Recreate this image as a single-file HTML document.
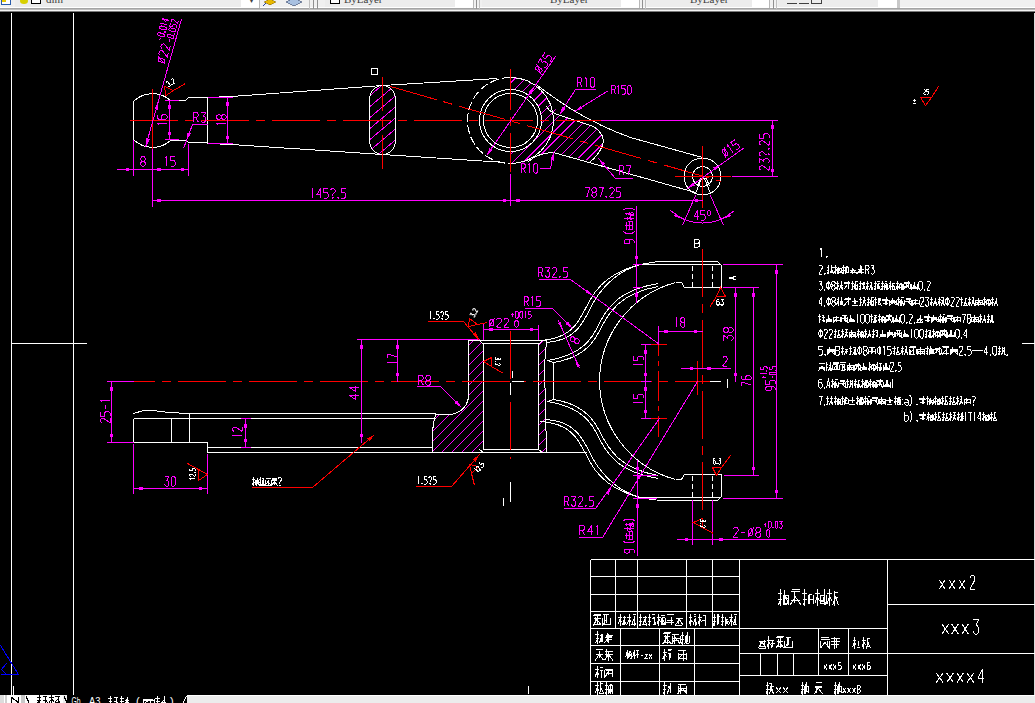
<!DOCTYPE html>
<html><head><meta charset="utf-8"><style>
html,body{margin:0;padding:0;background:#000;overflow:hidden;width:1035px;height:703px}
svg{display:block;font-family:"Liberation Sans",sans-serif}
line,polyline,polygon,path,rect,circle{shape-rendering:crispEdges}
</style></head><body>
<svg width="1035" height="703" viewBox="0 0 1035 703">
<rect x="0" y="0" width="1035" height="703" fill="#000"/>
<line x1="11.5" y1="12.5" x2="11.5" y2="694.5" stroke="#ffffff" stroke-width="1"/>
<line x1="73.5" y1="12.5" x2="73.5" y2="694.5" stroke="#ffffff" stroke-width="1"/>
<line x1="11.5" y1="343.5" x2="86.5" y2="343.5" stroke="#ffffff" stroke-width="1"/>
<line x1="1034.5" y1="12.5" x2="1034.5" y2="694.5" stroke="#dcdcdc" stroke-width="1"/>
<line x1="1021.5" y1="343.5" x2="1034.5" y2="343.5" stroke="#ffffff" stroke-width="1"/>
<line x1="13.5" y1="685.5" x2="13.5" y2="694.5" stroke="#ffffff" stroke-width="1"/>
<line x1="528.5" y1="685.5" x2="528.5" y2="693.5" stroke="#ffffff" stroke-width="1"/>
<line x1="0.5" y1="645.5" x2="18.5" y2="674.5" stroke="#0000ff" stroke-width="1"/>
<line x1="0.5" y1="674.5" x2="18.5" y2="674.5" stroke="#0000ff" stroke-width="1"/>
<polyline points="6.5,663.5 1.5,669.5 6.5,674.5" fill="none" stroke="#0000ff"/>
<defs>
<pattern id="h1" patternUnits="userSpaceOnUse" width="10" height="10" patternTransform="rotate(45)"><line x1="0" y1="0" x2="0" y2="10" stroke="#ff00ff" stroke-width="1.2"/></pattern>
<clipPath id="cpSlot"><rect x="369.5" y="85.5" width="26" height="69" rx="13" ry="14"/></clipPath>
<clipPath id="cpHub"><path d="M510,77 A43,43 0 0 1 546,97 L560,115 L593,126 Q606,135 602,145 Q598,156 590,161 L553,152 Q538,153 528,161 A43,43 0 0 1 510,163 Z"/></clipPath>
</defs>
<g clip-path="url(#cpSlot)"><path d="M360.0,60.0L410.0,17.5M360.0,71.0L410.0,28.5M360.0,82.0L410.0,39.5M360.0,93.0L410.0,50.5M360.0,104.0L410.0,61.5M360.0,115.0L410.0,72.5M360.0,126.0L410.0,83.5M360.0,137.0L410.0,94.5M360.0,148.0L410.0,105.5M360.0,159.0L410.0,116.5M360.0,170.0L410.0,127.5M360.0,181.0L410.0,138.5M360.0,192.0L410.0,149.5M360.0,203.0L410.0,160.5M360.0,214.0L410.0,171.5" stroke="#ff00ff" fill="none"/></g>
<g clip-path="url(#cpHub)"><path d="M500.0,63.0L620.0,-57.0M500.0,73.2L620.0,-46.8M500.0,83.4L620.0,-36.6M500.0,93.6L620.0,-26.4M500.0,103.8L620.0,-16.2M500.0,114.0L620.0,-6.0M500.0,124.2L620.0,4.2M500.0,134.4L620.0,14.4M500.0,144.6L620.0,24.6M500.0,154.8L620.0,34.8M500.0,165.0L620.0,45.0M500.0,175.2L620.0,55.2M500.0,185.4L620.0,65.4M500.0,195.6L620.0,75.6M500.0,205.8L620.0,85.8M500.0,216.0L620.0,96.0M500.0,226.2L620.0,106.2M500.0,236.4L620.0,116.4M500.0,246.6L620.0,126.6M500.0,256.8L620.0,136.8M500.0,267.0L620.0,147.0M500.0,277.2L620.0,157.2M500.0,287.4L620.0,167.4M500.0,297.6L620.0,177.6" stroke="#ff00ff" fill="none"/></g>
<circle cx="510.5" cy="120.5" r="31" fill="#000"/>
<path d="M133.5,101.5 L133.5,139.5 A27,27 0 0 0 170.5,140.5 L185.5,140.5 L188.5,142.5 L207.5,142.5 L207.5,97.5 L188.5,97.5 L185.5,100.5 L170.5,100.5 A27,27 0 0 0 133.5,101.5 Z" fill="none" stroke="#ffffff"/>
<polyline points="207.5,97.5 231.5,96.5 382.5,85.5 497.5,78.5" fill="none" stroke="#ffffff"/>
<polyline points="207.5,143.5 231.5,144.5 382.5,154.5 505.5,162.5" fill="none" stroke="#ffffff"/>
<rect x="369.5" y="85.5" width="26" height="69" rx="13" ry="14" fill="none" stroke="#fff"/>
<circle cx="510.5" cy="120.5" r="31" fill="none" stroke="#fff"/>
<circle cx="510.5" cy="120.5" r="27" fill="none" stroke="#fff"/>
<path d="M510.5,77.5 A43,43 0 0 1 510.5,163.5" fill="none" stroke="#ffffff"/>
<path d="M510.5,77.5 A43,43 0 0 0 510.5,163.5" fill="none" stroke="#ffffff" stroke-dasharray="9,3"/>
<path d="M537.5,85.5 C558,101 585,121 630.5,137.5 L702.5,157.5" fill="none" stroke="#ffffff"/>
<path d="M546.5,106.5 Q550,113 560.5,115.5 L593.5,126.5 Q606,135 602.5,145.5 Q598,156 590.5,161.5" fill="none" stroke="#ffffff"/>
<path d="M528.5,161.5 Q538,153 553.5,152.5 L695.5,192.5" fill="none" stroke="#ffffff"/>
<circle cx="702.5" cy="176.5" r="18.5" fill="none" stroke="#fff"/>
<circle cx="702.5" cy="176.5" r="10" fill="none" stroke="#fff"/>
<polyline points="701.5,178.5 695.5,193.5" fill="none" stroke="#ffffff"/>
<polyline points="704.5,178.5 710.5,193.5" fill="none" stroke="#ffffff"/>
<polyline points="697.5,186.5 700.5,178.5 706.5,178.5 709.5,186.5" fill="none" stroke="#ffffff"/>
<rect x="371.5" y="68.5" width="6" height="6" fill="none" stroke="#fff"/>
<line x1="129.5" y1="120.5" x2="600.5" y2="120.5" stroke="#ff0000" stroke-width="1" stroke-dasharray="48,7,9,7"/>
<line x1="152.5" y1="88.5" x2="152.5" y2="148.5" stroke="#ff0000" stroke-width="1"/>
<line x1="382.5" y1="76.5" x2="382.5" y2="169.5" stroke="#ff0000" stroke-width="1" stroke-dasharray="34,8,8,8"/>
<line x1="510.5" y1="68.5" x2="510.5" y2="171.5" stroke="#ff0000" stroke-width="1" stroke-dasharray="41,7,9,7"/>
<path d="M390.5,86.5 L721.5,181.5" fill="none" stroke="#ff0000" stroke-dasharray="48,7,9,7"/>
<line x1="674.5" y1="176.5" x2="730.5" y2="176.5" stroke="#ff0000" stroke-width="1"/>
<line x1="702.5" y1="145.5" x2="702.5" y2="207.5" stroke="#ff0000" stroke-width="1"/>
<line x1="181.5" y1="19" x2="145.5" y2="147" stroke="#ff00ff" stroke-width="1"/>
<polygon points="146.00,146.50 149.90,139.29 146.43,138.31" fill="#ff00ff"/>
<polygon points="158.50,101.50 154.60,108.71 158.07,109.69" fill="#ff00ff"/>
<path d="M166.75,58.25L167.92,57.05L169.08,57.05L170.25,58.25L170.25,62.75L169.08,63.95L167.92,63.95L166.75,62.75ZM171.42,55.70L165.58,65.30M173.17,57.50L174.33,56.00L176.67,56.00L177.83,57.50L177.83,59.00L173.17,65.00L177.83,65.00M180.17,57.50L181.33,56.00L183.67,56.00L184.83,57.50L184.83,59.00L180.17,65.00L184.83,65.00" stroke="#ff00ff" stroke-width="1" fill="none" stroke-linejoin="round" transform="rotate(-74.3 165 65)"/>
<path d="M163.61,38.81L165.82,38.81M167.67,36.30L168.41,35.16L169.88,35.16L170.62,36.30L170.62,40.86L169.88,42.00L168.41,42.00L167.67,40.86ZM172.33,41.43L172.98,41.43L172.98,42.00L172.33,42.00ZM174.68,36.30L175.42,35.16L176.90,35.16L177.64,36.30L177.64,40.86L176.90,42.00L175.42,42.00L174.68,40.86ZM179.48,36.30L180.22,35.16L180.22,42.00M185.02,42.00L185.02,35.16L182.81,39.72L185.76,39.72" stroke="#ff00ff" stroke-width="1" fill="none" stroke-linejoin="round" transform="rotate(-74.3 162.5 42)"/>
<path d="M173.07,40.31L175.22,40.31M177.01,37.80L177.73,36.66L179.16,36.66L179.88,37.80L179.88,42.36L179.16,43.50L177.73,43.50L177.01,42.36ZM181.54,42.93L182.16,42.93L182.16,43.50L181.54,43.50ZM183.82,37.80L184.54,36.66L185.97,36.66L186.69,37.80L186.69,42.36L185.97,43.50L184.54,43.50L183.82,42.36ZM190.99,36.66L188.12,36.66L188.12,39.51L190.27,39.51L190.99,40.65L190.99,42.36L190.27,43.50L188.12,43.50M192.42,37.80L193.13,36.66L194.57,36.66L195.28,37.80L195.28,38.94L192.42,43.50L195.28,43.50" stroke="#ff00ff" stroke-width="1" fill="none" stroke-linejoin="round" transform="rotate(-74.3 172 43.5)"/>
<line x1="116.5" y1="169.5" x2="188.5" y2="169.5" stroke="#ff00ff" stroke-width="1"/>
<line x1="133.5" y1="139.5" x2="133.5" y2="175.5" stroke="#ff00ff" stroke-width="1"/>
<line x1="152.5" y1="148.5" x2="152.5" y2="206.5" stroke="#ff00ff" stroke-width="1"/>
<line x1="188.5" y1="143.5" x2="188.5" y2="175.5" stroke="#ff00ff" stroke-width="1"/>
<polygon points="133.50,169.50 125.50,167.70 125.50,171.30" fill="#ff00ff"/>
<polygon points="152.50,169.50 160.50,171.30 160.50,167.70" fill="#ff00ff"/>
<polygon points="188.50,169.50 180.50,167.70 180.50,171.30" fill="#ff00ff"/>
<path d="M141.83,156.64L144.17,156.64L145.33,158.20L145.33,159.76L144.17,161.32L141.83,161.32L140.67,159.76L140.67,158.20ZM141.83,161.32L140.67,162.88L140.67,164.44L141.83,166.00L144.17,166.00L145.33,164.44L145.33,162.88L144.17,161.32" stroke="#ff00ff" stroke-width="1" fill="none" stroke-linejoin="round"/>
<path d="M165.27,158.20L166.45,156.64L166.45,166.00M175.32,156.64L170.59,156.64L170.59,160.54L174.14,160.54L175.32,162.10L175.32,164.44L174.14,166.00L170.59,166.00" stroke="#ff00ff" stroke-width="1" fill="none" stroke-linejoin="round"/>
<line x1="164.5" y1="100.5" x2="178.5" y2="100.5" stroke="#ff00ff" stroke-width="1"/>
<line x1="164.5" y1="139.5" x2="178.5" y2="139.5" stroke="#ff00ff" stroke-width="1"/>
<line x1="169.5" y1="100.5" x2="169.5" y2="139.5" stroke="#ff00ff" stroke-width="1"/>
<polygon points="169.50,100.50 167.70,108.50 171.30,108.50" fill="#ff00ff"/>
<polygon points="169.50,139.50 171.30,131.50 167.70,131.50" fill="#ff00ff"/>
<path d="M162.27,112.20L163.45,110.64L163.45,120.00M171.73,110.64L168.77,110.64L167.59,112.20L167.59,118.44L168.77,120.00L171.14,120.00L172.32,118.44L172.32,116.10L171.14,114.54L167.59,114.54" stroke="#ff00ff" stroke-width="1" fill="none" stroke-linejoin="round" transform="rotate(-90 167 120)"/>
<line x1="207.5" y1="97.5" x2="232.5" y2="97.5" stroke="#ff00ff" stroke-width="1"/>
<line x1="207.5" y1="143.5" x2="232.5" y2="143.5" stroke="#ff00ff" stroke-width="1"/>
<line x1="227.5" y1="97.5" x2="227.5" y2="143.5" stroke="#ff00ff" stroke-width="1"/>
<polygon points="227.50,97.50 225.70,105.50 229.30,105.50" fill="#ff00ff"/>
<polygon points="227.50,143.50 229.30,135.50 225.70,135.50" fill="#ff00ff"/>
<path d="M221.27,112.20L222.45,110.64L222.45,120.00M227.77,110.64L230.14,110.64L231.32,112.20L231.32,113.76L230.14,115.32L227.77,115.32L226.59,113.76L226.59,112.20ZM227.77,115.32L226.59,116.88L226.59,118.44L227.77,120.00L230.14,120.00L231.32,118.44L231.32,116.88L230.14,115.32" stroke="#ff00ff" stroke-width="1" fill="none" stroke-linejoin="round" transform="rotate(-90 226 120)"/>
<path d="M193.25,122.00L193.25,112.64L197.00,112.64L198.25,114.20L198.25,115.76L197.00,117.32L193.25,117.32M195.75,117.32L198.25,122.00M200.75,112.64L205.75,112.64L203.25,116.54L204.50,116.54L205.75,118.10L205.75,120.44L204.50,122.00L202.00,122.00L200.75,120.44" stroke="#ff00ff" stroke-width="1" fill="none" stroke-linejoin="round"/>
<line x1="192.5" y1="124.5" x2="207.5" y2="124.5" stroke="#ff00ff" stroke-width="1"/>
<line x1="192.5" y1="124.5" x2="183.5" y2="148.5" stroke="#ff00ff" stroke-width="1"/>
<polygon points="186.50,140.50 191.00,133.64 187.63,132.38" fill="#ff00ff"/>
<line x1="152.5" y1="200.5" x2="510.5" y2="200.5" stroke="#ff00ff" stroke-width="1"/>
<polygon points="152.50,200.50 160.50,202.30 160.50,198.70" fill="#ff00ff"/>
<polygon points="510.50,200.50 502.50,198.70 502.50,202.30" fill="#ff00ff"/>
<path d="M311.71,190.20L312.85,188.64L312.85,198.00M320.25,198.00L320.25,188.64L316.83,194.88L321.38,194.88M328.22,188.64L323.66,188.64L323.66,192.54L327.08,192.54L328.22,194.10L328.22,196.44L327.08,198.00L323.66,198.00M330.49,190.20L331.63,188.64L333.91,188.64L335.05,190.20L335.05,191.76L332.77,194.10L332.77,195.66M332.31,197.38L333.22,197.38L333.22,198.00L332.31,198.00ZM337.68,197.22L338.68,197.22L338.68,198.00L337.68,198.00ZM345.86,188.64L341.31,188.64L341.31,192.54L344.72,192.54L345.86,194.10L345.86,196.44L344.72,198.00L341.31,198.00" stroke="#ff00ff" stroke-width="1" fill="none" stroke-linejoin="round"/>
<line x1="510.5" y1="173.5" x2="510.5" y2="205.5" stroke="#ff00ff" stroke-width="1"/>
<line x1="510.5" y1="200.5" x2="702.5" y2="200.5" stroke="#ff00ff" stroke-width="1"/>
<polygon points="511.50,200.50 519.50,202.30 519.50,198.70" fill="#ff00ff"/>
<polygon points="702.50,200.50 694.50,198.70 694.50,202.30" fill="#ff00ff"/>
<path d="M585.13,187.64L589.67,187.64L586.84,197.00M593.07,187.64L595.34,187.64L596.48,189.20L596.48,190.76L595.34,192.32L593.07,192.32L591.94,190.76L591.94,189.20ZM593.07,192.32L591.94,193.88L591.94,195.44L593.07,197.00L595.34,197.00L596.48,195.44L596.48,193.88L595.34,192.32M598.75,187.64L603.28,187.64L600.45,197.00M605.91,196.22L606.90,196.22L606.90,197.00L605.91,197.00ZM609.52,189.20L610.66,187.64L612.93,187.64L614.06,189.20L614.06,190.76L609.52,197.00L614.06,197.00M620.87,187.64L616.33,187.64L616.33,191.54L619.73,191.54L620.87,193.10L620.87,195.44L619.73,197.00L616.33,197.00" stroke="#ff00ff" stroke-width="1" fill="none" stroke-linejoin="round"/>
<line x1="600.5" y1="120.5" x2="777.5" y2="120.5" stroke="#ff00ff" stroke-width="1"/>
<line x1="731.5" y1="176.5" x2="777.5" y2="176.5" stroke="#ff00ff" stroke-width="1"/>
<line x1="772.5" y1="120.5" x2="772.5" y2="176.5" stroke="#ff00ff" stroke-width="1"/>
<polygon points="772.50,120.50 770.70,128.50 774.30,128.50" fill="#ff00ff"/>
<polygon points="772.50,176.50 774.30,168.50 770.70,168.50" fill="#ff00ff"/>
<path d="M750.66,144.20L751.83,142.64L754.16,142.64L755.32,144.20L755.32,145.76L750.66,152.00L755.32,152.00M757.65,142.64L762.31,142.64L759.98,146.54L761.14,146.54L762.31,148.10L762.31,150.44L761.14,152.00L758.81,152.00L757.65,150.44M764.63,144.20L765.80,142.64L768.13,142.64L769.29,144.20L769.29,145.76L766.96,148.10L766.96,149.66M766.50,151.38L767.43,151.38L767.43,152.00L766.50,152.00ZM771.98,151.22L773.00,151.22L773.00,152.00L771.98,152.00ZM775.69,144.20L776.86,142.64L779.19,142.64L780.35,144.20L780.35,145.76L775.69,152.00L780.35,152.00M787.34,142.64L782.68,142.64L782.68,146.54L786.17,146.54L787.34,148.10L787.34,150.44L786.17,152.00L782.68,152.00" stroke="#ff00ff" stroke-width="1" fill="none" stroke-linejoin="round" transform="rotate(-90 769 152)"/>
<line x1="486.5" y1="155.5" x2="555.5" y2="56.5" stroke="#ff00ff" stroke-width="1"/>
<polygon points="486.50,155.50 492.56,149.98 489.61,147.91" fill="#ff00ff"/>
<polygon points="534.50,86.50 528.44,92.02 531.39,94.09" fill="#ff00ff"/>
<path d="M537.83,58.98L539.06,57.73L540.28,57.73L541.50,58.98L541.50,63.66L540.28,64.91L539.06,64.91L537.83,63.66ZM542.72,56.33L536.61,66.31M544.56,56.64L549.44,56.64L547.00,60.54L548.22,60.54L549.44,62.10L549.44,64.44L548.22,66.00L545.78,66.00L544.56,64.44M556.78,56.64L551.89,56.64L551.89,60.54L555.56,60.54L556.78,62.10L556.78,64.44L555.56,66.00L551.89,66.00" stroke="#ff00ff" stroke-width="1" fill="none" stroke-linejoin="round" transform="rotate(-55 547 66)"/>
<path d="M577.18,87.00L577.18,77.64L580.71,77.64L581.88,79.20L581.88,80.76L580.71,82.32L577.18,82.32M579.53,82.32L581.88,87.00M584.82,79.20L586.00,77.64L586.00,87.00M590.12,79.20L591.29,77.64L593.65,77.64L594.82,79.20L594.82,85.44L593.65,87.00L591.29,87.00L590.12,85.44Z" stroke="#ff00ff" stroke-width="1" fill="none" stroke-linejoin="round"/>
<line x1="575.5" y1="89.5" x2="595.5" y2="89.5" stroke="#ff00ff" stroke-width="1"/>
<line x1="575.5" y1="89.5" x2="559.5" y2="114.5" stroke="#ff00ff" stroke-width="1"/>
<polygon points="559.50,114.50 565.37,108.77 562.35,106.81" fill="#ff00ff"/>
<path d="M611.91,94.00L611.91,85.36L614.65,85.36L615.57,86.80L615.57,88.24L614.65,89.68L611.91,89.68M613.74,89.68L615.57,94.00M617.85,86.80L618.76,85.36L618.76,94.00M625.61,85.36L621.96,85.36L621.96,88.96L624.70,88.96L625.61,90.40L625.61,92.56L624.70,94.00L621.96,94.00M627.43,86.80L628.35,85.36L630.17,85.36L631.09,86.80L631.09,92.56L630.17,94.00L628.35,94.00L627.43,92.56Z" stroke="#ff00ff" stroke-width="1" fill="none" stroke-linejoin="round"/>
<line x1="608.5" y1="90.5" x2="574.5" y2="111.5" stroke="#ff00ff" stroke-width="1"/>
<polygon points="574.50,111.50 582.24,108.79 580.33,105.73" fill="#ff00ff"/>
<path d="M521.12,173.00L521.12,163.64L524.47,163.64L525.59,165.20L525.59,166.76L524.47,168.32L521.12,168.32M523.35,168.32L525.59,173.00M528.38,165.20L529.50,163.64L529.50,173.00M533.41,165.20L534.53,163.64L536.76,163.64L537.88,165.20L537.88,171.44L536.76,173.00L534.53,173.00L533.41,171.44Z" stroke="#ff00ff" stroke-width="1" fill="none" stroke-linejoin="round"/>
<polyline points="539.5,168.5 550.5,168.5 553.5,152.5" fill="none" stroke="#ff00ff"/>
<polygon points="553.50,152.50 550.34,160.07 553.88,160.69" fill="#ff00ff"/>
<path d="M619.17,175.00L619.17,165.64L622.67,165.64L623.83,167.20L623.83,168.76L622.67,170.32L619.17,170.32M621.50,170.32L623.83,175.00M626.17,165.64L630.83,165.64L627.92,175.00" stroke="#ff00ff" stroke-width="1" fill="none" stroke-linejoin="round"/>
<polyline points="632.5,178.5 615.5,178.5 598.5,158.5" fill="none" stroke="#ff00ff"/>
<polygon points="598.50,158.50 602.26,165.79 605.02,163.47" fill="#ff00ff"/>
<line x1="687.5" y1="188.5" x2="744.5" y2="147.5" stroke="#ff00ff" stroke-width="1"/>
<polygon points="687.50,188.50 695.06,185.32 692.97,182.39" fill="#ff00ff"/>
<polygon points="720.50,164.50 712.94,167.68 715.03,170.61" fill="#ff00ff"/>
<path d="M724.76,145.48L725.94,144.23L727.12,144.23L728.29,145.48L728.29,150.16L727.12,151.41L725.94,151.41L724.76,150.16ZM729.47,142.83L723.59,152.81M731.82,144.70L733.00,143.14L733.00,152.50M741.82,143.14L737.12,143.14L737.12,147.04L740.65,147.04L741.82,148.60L741.82,150.94L740.65,152.50L737.12,152.50" stroke="#ff00ff" stroke-width="1" fill="none" stroke-linejoin="round" transform="rotate(-35.5 733 152.5)"/>
<line x1="695.5" y1="195.5" x2="682.5" y2="225.5" stroke="#ff00ff" stroke-width="1"/>
<line x1="710.5" y1="195.5" x2="723.5" y2="225.5" stroke="#ff00ff" stroke-width="1"/>
<path d="M670.5,210.5 A47,47 0 0 0 734.5,210.5" fill="none" stroke="#ff00ff"/>
<polygon points="681.50,218.50 675.47,212.94 673.67,216.06" fill="#ff00ff"/>
<polygon points="723.50,218.50 731.33,216.06 729.53,212.94" fill="#ff00ff"/>
<path d="M697.44,220.00L697.44,210.64L694.11,216.88L698.56,216.88M705.22,210.64L700.78,210.64L700.78,214.54L704.11,214.54L705.22,216.10L705.22,218.44L704.11,220.00L700.78,220.00M708.33,210.64L709.89,210.64L710.78,211.89L710.78,214.07L709.89,215.32L708.33,215.32L707.44,214.07L707.44,211.89Z" stroke="#ff00ff" stroke-width="1" fill="none" stroke-linejoin="round"/>
<path d="M913.06,100.64L915.84,100.64M914.45,99.20L914.45,102.08M913.06,103.52L915.84,103.52" stroke="#ffffff" stroke-width="1" fill="none" stroke-linejoin="round"/>
<polygon points="920.5,97.5 931.5,97.5 925.5,105.5" fill="none" stroke="#ff0000"/>
<line x1="931.5" y1="97.5" x2="938.5" y2="86.5" stroke="#ff0000" stroke-width="1"/>
<path d="M923.50,90.40L924.00,89.68L925.00,89.68L925.50,90.40L925.50,91.12L923.50,94.00L925.50,94.00M928.50,89.68L926.50,89.68L926.50,91.48L928.00,91.48L928.50,92.20L928.50,93.28L928.00,94.00L926.50,94.00" stroke="#ffffff" stroke-width="1" fill="none" stroke-linejoin="round"/>
<defs>
<clipPath id="cpWallL"><path d="M468,340 L479,340 L483,344 L483,449 L479,452 L432,452 Q431,430 435,414 L450,414 Q466,412 468,397 Z"/></clipPath>
<clipPath id="cpWallR"><path d="M538,344 L542,340 L547,340 L544.5,365 L546,452 L538,452 Z"/></clipPath>
</defs>
<g clip-path="url(#cpWallL)"><path d="M420.0,324.0L560.0,184.0M420.0,334.0L560.0,194.0M420.0,344.0L560.0,204.0M420.0,354.0L560.0,214.0M420.0,364.0L560.0,224.0M420.0,374.0L560.0,234.0M420.0,384.0L560.0,244.0M420.0,394.0L560.0,254.0M420.0,404.0L560.0,264.0M420.0,414.0L560.0,274.0M420.0,424.0L560.0,284.0M420.0,434.0L560.0,294.0M420.0,444.0L560.0,304.0M420.0,454.0L560.0,314.0M420.0,464.0L560.0,324.0M420.0,474.0L560.0,334.0M420.0,484.0L560.0,344.0M420.0,494.0L560.0,354.0M420.0,504.0L560.0,364.0M420.0,514.0L560.0,374.0M420.0,524.0L560.0,384.0M420.0,534.0L560.0,394.0M420.0,544.0L560.0,404.0M420.0,554.0L560.0,414.0M420.0,564.0L560.0,424.0M420.0,574.0L560.0,434.0M420.0,584.0L560.0,444.0M420.0,594.0L560.0,454.0M420.0,604.0L560.0,464.0" stroke="#ff00ff" fill="none"/></g>
<g clip-path="url(#cpWallR)"><path d="M520.0,324.0L560.0,284.0M520.0,334.0L560.0,294.0M520.0,344.0L560.0,304.0M520.0,354.0L560.0,314.0M520.0,364.0L560.0,324.0M520.0,374.0L560.0,334.0M520.0,384.0L560.0,344.0M520.0,394.0L560.0,354.0M520.0,404.0L560.0,364.0M520.0,414.0L560.0,374.0M520.0,424.0L560.0,384.0M520.0,434.0L560.0,394.0M520.0,444.0L560.0,404.0M520.0,454.0L560.0,414.0M520.0,464.0L560.0,424.0M520.0,474.0L560.0,434.0M520.0,484.0L560.0,444.0M520.0,494.0L560.0,454.0M520.0,504.0L560.0,464.0" stroke="#ff00ff" fill="none"/></g>
<path d="M133.5,413.5 L143.5,410.5 L153.5,410.5 L168.5,412.5 L189.5,413.5 L435.5,413.5" fill="none" stroke="#ffffff"/>
<line x1="133.5" y1="418.5" x2="435.5" y2="418.5" stroke="#ffffff" stroke-width="1"/>
<line x1="133.5" y1="418.5" x2="133.5" y2="442.5" stroke="#ffffff" stroke-width="1"/>
<line x1="171.5" y1="418.5" x2="171.5" y2="442.5" stroke="#ffffff" stroke-width="1"/>
<line x1="189.5" y1="413.5" x2="189.5" y2="442.5" stroke="#ffffff" stroke-width="1"/>
<polyline points="133.5,442.5 207.5,442.5 207.5,452.5 432.5,452.5" fill="none" stroke="#ffffff"/>
<line x1="207.5" y1="447.5" x2="432.5" y2="447.5" stroke="#ffffff" stroke-width="1"/>
<path d="M450.5,414.5 Q466,412 468.5,397.5 L468.5,340.5 L546.5,340.5 L544.5,365.5 L546.5,452.5 L432.5,452.5" fill="none" stroke="#ffffff"/>
<path d="M435.5,414.5 Q431,430 432.5,452.5" fill="none" stroke="#ffffff"/>
<line x1="435.5" y1="414.5" x2="450.5" y2="414.5" stroke="#ffffff" stroke-width="1"/>
<rect x="483.5" y="343.5" width="55" height="106" fill="none" stroke="#fff"/>
<line x1="479.5" y1="340.5" x2="483.5" y2="344.5" stroke="#ffffff" stroke-width="1"/>
<line x1="542.5" y1="340.5" x2="538.5" y2="344.5" stroke="#ffffff" stroke-width="1"/>
<line x1="479.5" y1="449.5" x2="483.5" y2="452.5" stroke="#ffffff" stroke-width="1"/>
<line x1="538.5" y1="449.5" x2="542.5" y2="452.5" stroke="#ffffff" stroke-width="1"/>
<path d="M540.5,340.5 C575,338.5 580,318 590,300 C600,282 620,266 655.5,262 L717.5,261.5 L721.5,265.5 L721.5,287.5 L684.5,287.5 L681.5,282.5 L675.5,282.5" fill="none" stroke="#fff"/><path d="M546.5,342.5 C577,340.5 584,321 593,303 C603,286 618,271 640,264.5 L721,264.5" fill="none" stroke="#fff"/><path d="M547.5,360.5 C575,356 588,345 596,330 C606,308 618,290 658.5,283.5" fill="none" stroke="#fff"/><path d="M553.5,362.5 C579,358.5 591,347 599,332 C609,311 621,293 658.5,286.5" fill="none" stroke="#fff"/><path d="M547.5,360.5 L553.5,362.5 L553.5,381.5" fill="none" stroke="#fff"/><path d="M675.5,282.5 A103,103 0 0 0 599.5,381.5" fill="none" stroke="#fff"/>
<g transform="matrix(1,0,0,-1,0,762)"><path d="M540.5,340.5 C575,338.5 580,318 590,300 C600,282 620,266 655.5,262 L717.5,261.5 L721.5,265.5 L721.5,287.5 L684.5,287.5 L681.5,282.5 L675.5,282.5" fill="none" stroke="#fff"/><path d="M546.5,342.5 C577,340.5 584,321 593,303 C603,286 618,271 640,264.5 L721,264.5" fill="none" stroke="#fff"/><path d="M547.5,360.5 C575,356 588,345 596,330 C606,308 618,290 658.5,283.5" fill="none" stroke="#fff"/><path d="M553.5,362.5 C579,358.5 591,347 599,332 C609,311 621,293 658.5,286.5" fill="none" stroke="#fff"/><path d="M547.5,360.5 L553.5,362.5 L553.5,381.5" fill="none" stroke="#fff"/><path d="M675.5,282.5 A103,103 0 0 0 599.5,381.5" fill="none" stroke="#fff"/></g>
<line x1="546.5" y1="452.5" x2="586.5" y2="452.5" stroke="#ffffff" stroke-width="1"/>
<line x1="692.5" y1="265.5" x2="692.5" y2="287.5" stroke="#ffffff" stroke-width="1" stroke-dasharray="5,3"/>
<line x1="712.5" y1="265.5" x2="712.5" y2="287.5" stroke="#ffffff" stroke-width="1" stroke-dasharray="5,3"/>
<line x1="692.5" y1="475.5" x2="692.5" y2="498.5" stroke="#ffffff" stroke-width="1" stroke-dasharray="5,3"/>
<line x1="712.5" y1="475.5" x2="712.5" y2="498.5" stroke="#ffffff" stroke-width="1" stroke-dasharray="5,3"/>
<line x1="133" y1="381.5" x2="720" y2="381.5" stroke="#ff0000" stroke-dasharray="48,7,9,7" stroke-dashoffset="26"/>
<line x1="510.5" y1="330.5" x2="510.5" y2="458.5" stroke="#ff0000" stroke-width="1" stroke-dasharray="48,7,9,7"/>
<line x1="702.5" y1="248.5" x2="702.5" y2="514.5" stroke="#ff0000" stroke-width="1" stroke-dasharray="48,7,9,7"/>
<line x1="658.5" y1="325.5" x2="658.5" y2="436.5" stroke="#ff0000" stroke-width="1" stroke-dasharray="30,5,5,5"/>
<line x1="697.5" y1="360.5" x2="697.5" y2="394.5" stroke="#ff0000" stroke-width="1"/>
<line x1="650.5" y1="344.5" x2="666.5" y2="344.5" stroke="#ff0000" stroke-width="1"/>
<line x1="650.5" y1="418.5" x2="666.5" y2="418.5" stroke="#ff0000" stroke-width="1"/>
<line x1="512.5" y1="370.5" x2="512.5" y2="377.5" stroke="#ffffff" stroke-width="1"/>
<line x1="511.5" y1="381.5" x2="523.5" y2="381.5" stroke="#ffffff" stroke-width="1"/>
<line x1="510.5" y1="382.5" x2="510.5" y2="394.5" stroke="#ffffff" stroke-width="1"/>
<line x1="709.5" y1="381.5" x2="720.5" y2="381.5" stroke="#ffffff" stroke-width="1"/>
<line x1="727.5" y1="378.5" x2="727.5" y2="387.5" stroke="#ffffff" stroke-width="1"/>
<line x1="510.5" y1="481.5" x2="510.5" y2="501.5" stroke="#ffffff" stroke-width="1"/>
<line x1="503.5" y1="497.5" x2="503.5" y2="505.5" stroke="#ffffff" stroke-width="1"/>
<line x1="106.5" y1="381.5" x2="133.5" y2="381.5" stroke="#ff00ff" stroke-width="1"/>
<line x1="106.5" y1="442.5" x2="133.5" y2="442.5" stroke="#ff00ff" stroke-width="1"/>
<line x1="111.5" y1="381.5" x2="111.5" y2="442.5" stroke="#ff00ff" stroke-width="1"/>
<polygon points="111.50,382.50 109.70,390.50 113.30,390.50" fill="#ff00ff"/>
<polygon points="111.50,441.50 113.30,433.50 109.70,433.50" fill="#ff00ff"/>
<path d="M98.13,403.20L99.26,401.64L101.52,401.64L102.65,403.20L102.65,404.76L98.13,411.00L102.65,411.00M109.43,401.64L104.91,401.64L104.91,405.54L108.30,405.54L109.43,407.10L109.43,409.44L108.30,411.00L104.91,411.00M112.26,406.63L115.65,406.63M119.04,403.20L120.17,401.64L120.17,411.00" stroke="#ff00ff" stroke-width="1" fill="none" stroke-linejoin="round" transform="rotate(-90 110 411)"/>
<line x1="240.5" y1="418.5" x2="250.5" y2="418.5" stroke="#ff00ff" stroke-width="1"/>
<line x1="240.5" y1="447.5" x2="250.5" y2="447.5" stroke="#ff00ff" stroke-width="1"/>
<line x1="245.5" y1="418.5" x2="245.5" y2="447.5" stroke="#ff00ff" stroke-width="1"/>
<polygon points="245.50,419.50 243.70,427.50 247.30,427.50" fill="#ff00ff"/>
<polygon points="245.50,446.50 247.30,438.50 243.70,438.50" fill="#ff00ff"/>
<path d="M237.64,424.20L238.73,422.64L238.73,432.00M242.55,424.20L243.64,422.64L245.82,422.64L246.91,424.20L246.91,425.76L242.55,432.00L246.91,432.00" stroke="#ff00ff" stroke-width="1" fill="none" stroke-linejoin="round" transform="rotate(-90 242 432)"/>
<line x1="133.5" y1="443.5" x2="133.5" y2="493.5" stroke="#ff00ff" stroke-width="1"/>
<line x1="207.5" y1="453.5" x2="207.5" y2="493.5" stroke="#ff00ff" stroke-width="1"/>
<line x1="133.5" y1="488.5" x2="207.5" y2="488.5" stroke="#ff00ff" stroke-width="1"/>
<polygon points="134.50,488.50 142.50,490.30 142.50,486.70" fill="#ff00ff"/>
<polygon points="206.50,488.50 198.50,486.70 198.50,490.30" fill="#ff00ff"/>
<path d="M164.58,476.64L168.92,476.64L166.75,480.54L167.83,480.54L168.92,482.10L168.92,484.44L167.83,486.00L165.67,486.00L164.58,484.44M171.08,478.20L172.17,476.64L174.33,476.64L175.42,478.20L175.42,484.44L174.33,486.00L172.17,486.00L171.08,484.44Z" stroke="#ff00ff" stroke-width="1" fill="none" stroke-linejoin="round"/>
<line x1="356.5" y1="339.5" x2="479.5" y2="339.5" stroke="#ff00ff" stroke-width="1"/>
<line x1="361.5" y1="339.5" x2="361.5" y2="442.5" stroke="#ff00ff" stroke-width="1"/>
<polygon points="361.50,340.50 359.70,348.50 363.30,348.50" fill="#ff00ff"/>
<polygon points="361.50,441.50 363.30,433.50 359.70,433.50" fill="#ff00ff"/>
<path d="M356.33,393.00L356.33,383.64L352.33,389.88L357.67,389.88M364.33,393.00L364.33,383.64L360.33,389.88L365.67,389.88" stroke="#ff00ff" stroke-width="1" fill="none" stroke-linejoin="round" transform="rotate(-90 359 393)"/>
<line x1="397.5" y1="339.5" x2="397.5" y2="381.5" stroke="#ff00ff" stroke-width="1"/>
<polygon points="397.50,340.50 395.70,348.50 399.30,348.50" fill="#ff00ff"/>
<polygon points="397.50,380.50 399.30,372.50 395.70,372.50" fill="#ff00ff"/>
<path d="M392.64,351.20L393.73,349.64L393.73,359.00M397.55,349.64L401.91,349.64L399.18,359.00" stroke="#ff00ff" stroke-width="1" fill="none" stroke-linejoin="round" transform="rotate(-90 397 359)"/>
<line x1="483.5" y1="323.5" x2="483.5" y2="339.5" stroke="#ff00ff" stroke-width="1"/>
<line x1="538.5" y1="324.5" x2="538.5" y2="339.5" stroke="#ff00ff" stroke-width="1"/>
<line x1="483.5" y1="329.5" x2="538.5" y2="329.5" stroke="#ff00ff" stroke-width="1"/>
<polygon points="484.50,329.50 492.50,331.30 492.50,327.70" fill="#ff00ff"/>
<polygon points="537.50,329.50 529.50,327.70 529.50,331.30" fill="#ff00ff"/>
<path d="M489.83,320.52L491.06,319.37L492.28,319.37L493.50,320.52L493.50,324.84L492.28,325.99L491.06,325.99L489.83,324.84ZM494.72,318.07L488.61,327.29M496.56,319.80L497.78,318.36L500.22,318.36L501.44,319.80L501.44,321.24L496.56,327.00L501.44,327.00M503.89,319.80L505.11,318.36L507.56,318.36L508.78,319.80L508.78,321.24L503.89,327.00L508.78,327.00" stroke="#ff00ff" stroke-width="1" fill="none" stroke-linejoin="round"/>
<path d="M510.99,314.76L513.57,314.76M512.28,312.92L512.28,316.60M515.31,312.60L516.07,311.52L517.59,311.52L518.34,312.60L518.34,316.92L517.59,318.00L516.07,318.00L515.31,316.92ZM519.86,312.60L520.62,311.52L522.14,311.52L522.90,312.60L522.90,316.92L522.14,318.00L520.62,318.00L519.86,316.92ZM524.79,312.60L525.55,311.52L525.55,318.00M531.24,311.52L528.21,311.52L528.21,314.22L530.48,314.22L531.24,315.30L531.24,316.92L530.48,318.00L528.21,318.00" stroke="#ff00ff" stroke-width="1" fill="none" stroke-linejoin="round"/>
<path d="M514.83,321.60L515.67,320.52L517.33,320.52L518.17,321.60L518.17,325.92L517.33,327.00L515.67,327.00L514.83,325.92Z" stroke="#ff00ff" stroke-width="1" fill="none" stroke-linejoin="round"/>
<path d="M418.25,385.00L418.25,375.64L422.00,375.64L423.25,377.20L423.25,378.76L422.00,380.32L418.25,380.32M420.75,380.32L423.25,385.00M427.00,375.64L429.50,375.64L430.75,377.20L430.75,378.76L429.50,380.32L427.00,380.32L425.75,378.76L425.75,377.20ZM427.00,380.32L425.75,381.88L425.75,383.44L427.00,385.00L429.50,385.00L430.75,383.44L430.75,381.88L429.50,380.32" stroke="#ff00ff" stroke-width="1" fill="none" stroke-linejoin="round"/>
<line x1="416.5" y1="386.5" x2="440.5" y2="386.5" stroke="#ff00ff" stroke-width="1"/>
<line x1="440.5" y1="386.5" x2="461.5" y2="407.5" stroke="#ff00ff" stroke-width="1"/>
<polygon points="461.50,407.50 457.12,400.57 454.57,403.12" fill="#ff00ff"/>
<path d="M524.12,306.00L524.12,296.64L527.47,296.64L528.59,298.20L528.59,299.76L527.47,301.32L524.12,301.32M526.35,301.32L528.59,306.00M531.38,298.20L532.50,296.64L532.50,306.00M540.88,296.64L536.41,296.64L536.41,300.54L539.76,300.54L540.88,302.10L540.88,304.44L539.76,306.00L536.41,306.00" stroke="#ff00ff" stroke-width="1" fill="none" stroke-linejoin="round"/>
<line x1="524.5" y1="308.5" x2="552.5" y2="308.5" stroke="#ff00ff" stroke-width="1"/>
<line x1="552.5" y1="308.5" x2="573.5" y2="329.5" stroke="#ff00ff" stroke-width="1"/>
<polygon points="572.50,328.50 568.12,321.57 565.57,324.12" fill="#ff00ff"/>
<line x1="558.5" y1="320.5" x2="579.5" y2="368.5" stroke="#ff00ff" stroke-width="1"/>
<polygon points="562.50,329.50 560.89,321.46 557.60,322.92" fill="#ff00ff"/>
<polygon points="575.50,359.50 577.11,367.54 580.40,366.08" fill="#ff00ff"/>
<path d="M577.83,332.64L580.17,332.64L581.33,334.20L581.33,335.76L580.17,337.32L577.83,337.32L576.67,335.76L576.67,334.20ZM577.83,337.32L576.67,338.88L576.67,340.44L577.83,342.00L580.17,342.00L581.33,340.44L581.33,338.88L580.17,337.32" stroke="#ff00ff" stroke-width="1" fill="none" stroke-linejoin="round" transform="rotate(-66 579 342)"/>
<path d="M538.16,277.00L538.16,267.64L541.65,267.64L542.82,269.20L542.82,270.76L541.65,272.32L538.16,272.32M540.49,272.32L542.82,277.00M545.15,267.64L549.80,267.64L547.47,271.54L548.64,271.54L549.80,273.10L549.80,275.44L548.64,277.00L546.31,277.00L545.15,275.44M552.13,269.20L553.29,267.64L555.62,267.64L556.78,269.20L556.78,270.76L552.13,277.00L556.78,277.00M559.47,276.22L560.49,276.22L560.49,277.00L559.47,277.00ZM567.84,267.64L563.18,267.64L563.18,271.54L566.67,271.54L567.84,273.10L567.84,275.44L566.67,277.00L563.18,277.00" stroke="#ff00ff" stroke-width="1" fill="none" stroke-linejoin="round"/>
<line x1="538.5" y1="279.5" x2="570.5" y2="279.5" stroke="#ff00ff" stroke-width="1"/>
<line x1="570.5" y1="279.5" x2="659.5" y2="344.5" stroke="#ff00ff" stroke-width="1"/>
<polygon points="592.50,295.50 587.09,289.34 584.97,292.25" fill="#ff00ff"/>
<line x1="658.5" y1="325.5" x2="658.5" y2="344.5" stroke="#ff00ff" stroke-width="1"/>
<line x1="658.5" y1="331.5" x2="702.5" y2="331.5" stroke="#ff00ff" stroke-width="1"/>
<polygon points="659.50,331.50 667.50,333.30 667.50,329.70" fill="#ff00ff"/>
<polygon points="701.50,331.50 693.50,329.70 693.50,333.30" fill="#ff00ff"/>
<path d="M675.64,319.20L676.73,317.64L676.73,327.00M681.64,317.64L683.82,317.64L684.91,319.20L684.91,320.76L683.82,322.32L681.64,322.32L680.55,320.76L680.55,319.20ZM681.64,322.32L680.55,323.88L680.55,325.44L681.64,327.00L683.82,327.00L684.91,325.44L684.91,323.88L683.82,322.32" stroke="#ff00ff" stroke-width="1" fill="none" stroke-linejoin="round"/>
<line x1="640.5" y1="344.5" x2="650.5" y2="344.5" stroke="#ff00ff" stroke-width="1"/>
<line x1="640.5" y1="418.5" x2="650.5" y2="418.5" stroke="#ff00ff" stroke-width="1"/>
<line x1="640.5" y1="381.5" x2="650.5" y2="381.5" stroke="#ff00ff" stroke-width="1"/>
<line x1="645.5" y1="344.5" x2="645.5" y2="418.5" stroke="#ff00ff" stroke-width="1"/>
<polygon points="645.50,345.50 643.70,353.50 647.30,353.50" fill="#ff00ff"/>
<polygon points="645.50,380.50 647.30,372.50 643.70,372.50" fill="#ff00ff"/>
<polygon points="645.50,382.50 643.70,390.50 647.30,390.50" fill="#ff00ff"/>
<polygon points="645.50,417.50 647.30,409.50 643.70,409.50" fill="#ff00ff"/>
<path d="M638.64,353.20L639.73,351.64L639.73,361.00M647.91,351.64L643.55,351.64L643.55,355.54L646.82,355.54L647.91,357.10L647.91,359.44L646.82,361.00L643.55,361.00" stroke="#ff00ff" stroke-width="1" fill="none" stroke-linejoin="round" transform="rotate(-90 643 361)"/>
<path d="M638.64,391.20L639.73,389.64L639.73,399.00M647.91,389.64L643.55,389.64L643.55,393.54L646.82,393.54L647.91,395.10L647.91,397.44L646.82,399.00L643.55,399.00" stroke="#ff00ff" stroke-width="1" fill="none" stroke-linejoin="round" transform="rotate(-90 643 399)"/>
<line x1="680.5" y1="368.5" x2="730.5" y2="368.5" stroke="#ff00ff" stroke-width="1"/>
<polygon points="697.50,368.50 689.50,366.70 689.50,370.30" fill="#ff00ff"/>
<polygon points="702.50,368.50 710.50,370.30 710.50,366.70" fill="#ff00ff"/>
<path d="M722.67,358.20L723.83,356.64L726.17,356.64L727.33,358.20L727.33,359.76L722.67,366.00L727.33,366.00" stroke="#ff00ff" stroke-width="1" fill="none" stroke-linejoin="round"/>
<line x1="722.5" y1="264.5" x2="782.5" y2="264.5" stroke="#ff00ff" stroke-width="1"/>
<line x1="722.5" y1="287.5" x2="758.5" y2="287.5" stroke="#ff00ff" stroke-width="1"/>
<line x1="723.5" y1="475.5" x2="758.5" y2="475.5" stroke="#ff00ff" stroke-width="1"/>
<line x1="722.5" y1="498.5" x2="782.5" y2="498.5" stroke="#ff00ff" stroke-width="1"/>
<line x1="735.5" y1="287.5" x2="735.5" y2="381.5" stroke="#ff00ff" stroke-width="1"/>
<polygon points="735.50,288.50 733.70,296.50 737.30,296.50" fill="#ff00ff"/>
<polygon points="735.50,380.50 737.30,372.50 733.70,372.50" fill="#ff00ff"/>
<path d="M726.33,324.64L731.67,324.64L729.00,328.54L730.33,328.54L731.67,330.10L731.67,332.44L730.33,334.00L727.67,334.00L726.33,332.44M735.67,324.64L738.33,324.64L739.67,326.20L739.67,327.76L738.33,329.32L735.67,329.32L734.33,327.76L734.33,326.20ZM735.67,329.32L734.33,330.88L734.33,332.44L735.67,334.00L738.33,334.00L739.67,332.44L739.67,330.88L738.33,329.32" stroke="#ff00ff" stroke-width="1" fill="none" stroke-linejoin="round" transform="rotate(-90 733 334)"/>
<line x1="753.5" y1="287.5" x2="753.5" y2="475.5" stroke="#ff00ff" stroke-width="1"/>
<polygon points="753.50,288.50 751.70,296.50 755.30,296.50" fill="#ff00ff"/>
<polygon points="753.50,474.50 755.30,466.50 751.70,466.50" fill="#ff00ff"/>
<path d="M745.58,371.64L749.92,371.64L747.21,381.00M755.88,371.64L753.17,371.64L752.08,373.20L752.08,379.44L753.17,381.00L755.33,381.00L756.42,379.44L756.42,377.10L755.33,375.54L752.08,375.54" stroke="#ff00ff" stroke-width="1" fill="none" stroke-linejoin="round" transform="rotate(-90 751 381)"/>
<line x1="776.5" y1="264.5" x2="776.5" y2="498.5" stroke="#ff00ff" stroke-width="1"/>
<polygon points="776.50,265.50 774.70,273.50 778.30,273.50" fill="#ff00ff"/>
<polygon points="776.50,497.50 778.30,489.50 774.70,489.50" fill="#ff00ff"/>
<path d="M780.42,388.10L777.17,388.10L776.08,386.54L776.08,384.20L777.17,382.64L779.33,382.64L780.42,384.20L780.42,390.44L779.33,392.00L776.62,392.00M786.92,382.64L782.58,382.64L782.58,386.54L785.83,386.54L786.92,388.10L786.92,390.44L785.83,392.00L782.58,392.00" stroke="#ff00ff" stroke-width="1" fill="none" stroke-linejoin="round" transform="rotate(-90 775 392)"/>
<path d="M767.82,375.76L769.98,375.76M768.90,373.92L768.90,377.60M771.76,373.60L772.39,372.52L772.39,379.00M774.81,378.46L775.36,378.46L775.36,379.00L774.81,379.00ZM779.37,372.52L776.83,372.52L776.83,375.22L778.73,375.22L779.37,376.30L779.37,377.92L778.73,379.00L776.83,379.00" stroke="#ff00ff" stroke-width="1" fill="none" stroke-linejoin="round" transform="rotate(-90 767 379)"/>
<path d="M776.91,375.98L778.72,375.98M780.23,373.60L780.84,372.52L782.05,372.52L782.65,373.60L782.65,377.92L782.05,379.00L780.84,379.00L780.23,377.92ZM784.05,378.46L784.58,378.46L784.58,379.00L784.05,379.00ZM788.40,372.52L785.98,372.52L785.98,375.22L787.79,375.22L788.40,376.30L788.40,377.92L787.79,379.00L785.98,379.00" stroke="#ff00ff" stroke-width="1" fill="none" stroke-linejoin="round" transform="rotate(-90 776 379)"/>
<line x1="636.5" y1="205.5" x2="636.5" y2="302.5" stroke="#ff00ff" stroke-width="1"/>
<line x1="632.5" y1="264.5" x2="641.5" y2="264.5" stroke="#ff00ff" stroke-width="1"/>
<line x1="632.5" y1="287.5" x2="641.5" y2="287.5" stroke="#ff00ff" stroke-width="1"/>
<polygon points="636.50,263.50 638.30,255.50 634.70,255.50" fill="#ff00ff"/>
<polygon points="636.50,288.50 634.70,296.50 638.30,296.50" fill="#ff00ff"/>
<path d="M620.28,221.83L617.11,221.83L616.06,220.17L616.06,217.67L617.11,216.00L619.22,216.00L620.28,217.67L620.28,224.33L619.22,226.00L616.58,226.00M628.51,215.17L626.93,217.67L626.93,224.33L628.51,226.83M630.5,218.2H637.7M631.5,221.6H637.6M631.0,221.9H637.9M630.9,224.9H638.1M634.6,219.2V225.2M634.9,217.1V223.9M630.4,219.5V225.0M638.8,219.5V225.0M641.6,216.0V226.0M639.8,219.0H643.3M639.8,224.5L641.6,220.5M641.6,220.5L643.3,223.0M644.7,218.1H647.4M645.1,221.8H647.8M643.9,222.2H647.2M644.3,225.4H647.3M645.7,219.9V225.0M646.1,217.3V223.0M646.1,220.5L643.9,225.5M646.1,221.0L648.3,225.5M650.04,215.17L651.63,217.67L651.63,224.33L650.04,226.83" stroke="#ff00ff" stroke-width="1" fill="none" stroke-linejoin="round" transform="rotate(-90 634 226)"/>
<line x1="637.5" y1="459.5" x2="637.5" y2="555.5" stroke="#ff00ff" stroke-width="1"/>
<line x1="632.5" y1="475.5" x2="656.5" y2="475.5" stroke="#ff00ff" stroke-width="1"/>
<line x1="632.5" y1="498.5" x2="656.5" y2="498.5" stroke="#ff00ff" stroke-width="1"/>
<polygon points="637.50,474.50 639.30,466.50 635.70,466.50" fill="#ff00ff"/>
<polygon points="637.50,499.50 635.70,507.50 639.30,507.50" fill="#ff00ff"/>
<path d="M621.00,531.83L618.00,531.83L617.00,530.17L617.00,527.67L618.00,526.00L620.00,526.00L621.00,527.67L621.00,534.33L620.00,536.00L617.50,536.00M628.80,525.17L627.30,527.67L627.30,534.33L628.80,536.83M630.7,528.2H637.5M631.6,531.6H637.4M631.2,531.9H637.7M631.0,534.9H637.9M634.6,529.2V535.2M634.8,527.1V533.9M630.6,529.5V535.0M638.5,529.5V535.0M641.2,526.0V536.0M639.5,529.0H642.9M639.5,534.5L641.2,530.5M641.2,530.5L642.9,533.0M644.2,528.1H646.7M644.5,531.8H647.1M643.4,532.2H646.5M643.8,535.4H646.6M645.1,529.9V535.0M645.5,527.3V533.0M645.4,530.5L643.3,535.5M645.4,531.0L647.5,535.5M649.20,525.17L650.70,527.67L650.70,534.33L649.20,536.83" stroke="#ff00ff" stroke-width="1" fill="none" stroke-linejoin="round" transform="rotate(-90 634 536)"/>
<line x1="692.5" y1="499.5" x2="692.5" y2="544.5" stroke="#ff00ff" stroke-width="1"/>
<line x1="712.5" y1="499.5" x2="712.5" y2="544.5" stroke="#ff00ff" stroke-width="1"/>
<line x1="676.5" y1="539.5" x2="785.5" y2="539.5" stroke="#ff00ff" stroke-width="1"/>
<polygon points="692.50,539.50 684.50,537.70 684.50,541.30" fill="#ff00ff"/>
<polygon points="714.50,539.50 722.50,541.30 722.50,537.70" fill="#ff00ff"/>
<path d="M733.25,529.20L734.50,527.64L737.00,527.64L738.25,529.20L738.25,530.76L733.25,537.00L738.25,537.00M741.38,532.63L745.12,532.63M748.88,529.98L750.12,528.73L751.38,528.73L752.62,529.98L752.62,534.66L751.38,535.91L750.12,535.91L748.88,534.66ZM753.88,527.33L747.62,537.31M757.00,527.64L759.50,527.64L760.75,529.20L760.75,530.76L759.50,532.32L757.00,532.32L755.75,530.76L755.75,529.20ZM757.00,532.32L755.75,533.88L755.75,535.44L757.00,537.00L759.50,537.00L760.75,535.44L760.75,533.88L759.50,532.32" stroke="#ff00ff" stroke-width="1" fill="none" stroke-linejoin="round"/>
<path d="M763.95,524.58L766.42,524.58M765.18,522.64L765.18,526.52M768.09,522.30L768.82,521.16L770.27,521.16L771.00,522.30L771.00,526.86L770.27,528.00L768.82,528.00L768.09,526.86ZM772.68,527.43L773.32,527.43L773.32,528.00L772.68,528.00ZM775.00,522.30L775.73,521.16L777.18,521.16L777.91,522.30L777.91,526.86L777.18,528.00L775.73,528.00L775.00,526.86ZM779.36,521.16L782.27,521.16L780.82,524.01L781.55,524.01L782.27,525.15L782.27,526.86L781.55,528.00L780.09,528.00L779.36,526.86" stroke="#ff00ff" stroke-width="1" fill="none" stroke-linejoin="round"/>
<path d="M766.75,531.00L767.50,529.80L769.00,529.80L769.75,531.00L769.75,535.80L769.00,537.00L767.50,537.00L766.75,535.80Z" stroke="#ff00ff" stroke-width="1" fill="none" stroke-linejoin="round"/>
<path d="M564.16,506.00L564.16,496.64L567.65,496.64L568.82,498.20L568.82,499.76L567.65,501.32L564.16,501.32M566.49,501.32L568.82,506.00M571.15,496.64L575.80,496.64L573.47,500.54L574.64,500.54L575.80,502.10L575.80,504.44L574.64,506.00L572.31,506.00L571.15,504.44M578.13,498.20L579.29,496.64L581.62,496.64L582.78,498.20L582.78,499.76L578.13,506.00L582.78,506.00M585.47,505.22L586.49,505.22L586.49,506.00L585.47,506.00ZM593.84,496.64L589.18,496.64L589.18,500.54L592.67,500.54L593.84,502.10L593.84,504.44L592.67,506.00L589.18,506.00" stroke="#ff00ff" stroke-width="1" fill="none" stroke-linejoin="round"/>
<line x1="563.5" y1="508.5" x2="595.5" y2="508.5" stroke="#ff00ff" stroke-width="1"/>
<line x1="595.5" y1="508.5" x2="659.5" y2="418.5" stroke="#ff00ff" stroke-width="1"/>
<polygon points="611.50,487.50 605.40,492.98 608.33,495.06" fill="#ff00ff"/>
<path d="M579.35,535.00L579.35,525.64L583.41,525.64L584.76,527.20L584.76,528.76L583.41,530.32L579.35,530.32M582.06,530.32L584.76,535.00M591.53,535.00L591.53,525.64L587.47,531.88L592.88,531.88M596.26,527.20L597.62,525.64L597.62,535.00" stroke="#ff00ff" stroke-width="1" fill="none" stroke-linejoin="round"/>
<line x1="578.5" y1="537.5" x2="602.5" y2="537.5" stroke="#ff00ff" stroke-width="1"/>
<line x1="602.5" y1="537.5" x2="697.5" y2="381.5" stroke="#ff00ff" stroke-width="1"/>
<polygon points="642.50,471.50 636.81,477.40 639.88,479.27" fill="#ff00ff"/>
<path d="M430.13,313.00L430.89,311.80L430.89,319.00M433.76,318.40L434.42,318.40L434.42,319.00L433.76,319.00ZM439.19,311.80L436.17,311.80L436.17,314.80L438.43,314.80L439.19,316.00L439.19,317.80L438.43,319.00L436.17,319.00M440.70,313.00L441.45,311.80L442.96,311.80L443.72,313.00L443.72,314.20L442.21,316.00L442.21,317.20M441.91,318.52L442.51,318.52L442.51,319.00L441.91,319.00ZM448.25,311.80L445.23,311.80L445.23,314.80L447.49,314.80L448.25,316.00L448.25,317.80L447.49,319.00L445.23,319.00" stroke="#ffffff" stroke-width="1" fill="none" stroke-linejoin="round"/>
<polyline points="427.5,321.5 463.5,321.5 479.5,340.5" fill="none" stroke="#ff0000"/>
<polygon points="479.50,339.50 475.74,332.21 472.98,334.53" fill="#ff0000"/>
<polygon points="469.5,318.5 468.5,326.5 477.5,324.5" fill="none" stroke="#ff0000"/>
<line x1="477.5" y1="324.5" x2="487.5" y2="322.5" stroke="#ff0000" stroke-width="1"/>
<path d="M418.13,478.00L418.89,476.80L418.89,484.00M421.76,483.40L422.42,483.40L422.42,484.00L421.76,484.00ZM427.19,476.80L424.17,476.80L424.17,479.80L426.43,479.80L427.19,481.00L427.19,482.80L426.43,484.00L424.17,484.00M428.70,478.00L429.45,476.80L430.96,476.80L431.72,478.00L431.72,479.20L430.21,481.00L430.21,482.20M429.91,483.52L430.51,483.52L430.51,484.00L429.91,484.00ZM436.25,476.80L433.23,476.80L433.23,479.80L435.49,479.80L436.25,481.00L436.25,482.80L435.49,484.00L433.23,484.00" stroke="#ffffff" stroke-width="1" fill="none" stroke-linejoin="round"/>
<polyline points="415.5,486.5 451.5,486.5 479.5,454.5" fill="none" stroke="#ff0000"/>
<polygon points="479.50,454.50 472.89,459.36 475.61,461.72" fill="#ff0000"/>
<polygon points="483.5,361.5 491.5,357.5 491.5,366.5" fill="none" stroke="#ff0000"/>
<line x1="491.5" y1="366.5" x2="503.5" y2="373.5" stroke="#ff0000" stroke-width="1"/>
<polygon points="720.5,287.5 716.5,296.5 725.5,296.5" fill="none" stroke="#ff0000"/>
<line x1="716.5" y1="296.5" x2="709.5" y2="307.5" stroke="#ff0000" stroke-width="1"/>
<polygon points="716.5,475.5 712.5,467.5 721.5,467.5" fill="none" stroke="#ff0000"/>
<line x1="721.5" y1="467.5" x2="730.5" y2="455.5" stroke="#ff0000" stroke-width="1"/>
<path d="M719.00,299.24L717.33,299.24L716.67,300.20L716.67,304.04L717.33,305.00L718.67,305.00L719.33,304.04L719.33,302.60L718.67,301.64L716.67,301.64M720.67,299.24L723.33,299.24L722.00,301.64L722.67,301.64L723.33,302.60L723.33,304.04L722.67,305.00L721.33,305.00L720.67,304.04" stroke="#ffffff" stroke-width="1" fill="none" stroke-linejoin="round"/>
<path d="M715.11,458.24L713.66,458.24L713.08,459.20L713.08,463.04L713.66,464.00L714.82,464.00L715.40,463.04L715.40,461.60L714.82,460.64L713.08,460.64M716.75,463.52L717.25,463.52L717.25,464.00L716.75,464.00ZM718.60,458.24L720.92,458.24L719.76,460.64L720.34,460.64L720.92,461.60L720.92,463.04L720.34,464.00L719.18,464.00L718.60,463.04" stroke="#ffffff" stroke-width="1" fill="none" stroke-linejoin="round"/>
<polygon points="693.5,522.5 702.5,518.5 702.5,527.5" fill="none" stroke="#ff0000"/>
<line x1="702.5" y1="527.5" x2="713.5" y2="533.5" stroke="#ff0000" stroke-width="1"/>
<polygon points="207.5,474.5 198.5,469.5 198.5,480.5" fill="none" stroke="#ff0000"/>
<line x1="198.5" y1="469.5" x2="187.5" y2="463.5" stroke="#ff0000" stroke-width="1"/>
<path d="M195.88,475.80L196.46,474.96L196.46,480.00M198.51,475.80L199.10,474.96L200.27,474.96L200.85,475.80L200.85,476.64L198.51,480.00L200.85,480.00M202.21,479.58L202.72,479.58L202.72,480.00L202.21,480.00ZM206.41,474.96L204.07,474.96L204.07,477.06L205.83,477.06L206.41,477.90L206.41,479.16L205.83,480.00L204.07,480.00" stroke="#ffffff" stroke-width="1" fill="none" stroke-linejoin="round" transform="rotate(-90 195 480)"/>
<path d="M253.6,477.0V486.0M252.3,479.7H254.8M252.3,484.6L253.6,481.1M253.6,481.1L254.8,483.3M255.4,481.4H257.8M255.8,482.0H257.7M256.8,480.2V485.5M257.3,478.1V484.2M255.2,480.1V485.1M258.1,480.1V485.1M260.0,477.0V486.0M258.8,479.7H261.2M259.0,482.6H261.1M259.0,485.6L259.9,483.8M261.8,478.7H264.3M262.4,480.6H264.2M262.3,485.2H263.8M263.2,477.5V485.8M262.5,480.0V485.8M263.0,481.1L261.5,485.6M263.0,481.5L264.5,485.6M265.9,478.4H270.6M265.8,485.0H270.8M265.6,485.5H270.8M268.0,480.3V486.0M268.1,481.1L265.2,485.6M268.1,481.5L271.0,485.6M265.3,480.1V485.1M271.0,480.1V485.1M271.8,478.5H276.9M272.3,479.6H277.4M272.0,480.1H277.0M271.8,483.0H276.9M274.3,478.1V484.3M274.4,478.7V485.4M274.5,481.1L271.6,485.6M274.5,481.5L277.4,485.6M278.43,478.50L279.14,477.00L280.57,477.00L281.29,478.50L281.29,480.00L279.86,482.25L279.86,483.75M279.57,485.40L280.14,485.40L280.14,486.00L279.57,486.00Z" stroke="#ffffff" stroke-width="1" fill="none" stroke-linejoin="round"/>
<polyline points="251.5,487.5 312.5,487.5 374.5,434.5" fill="none" stroke="#ff0000"/>
<polygon points="374.50,434.50 367.28,438.39 369.64,441.11" fill="#ff0000"/>
<polygon points="469.5,464.5 478.5,466.5 471.5,473.5" fill="none" stroke="#ff0000"/>
<line x1="471.5" y1="473.5" x2="474.5" y2="485.5" stroke="#ff0000" stroke-width="1"/>
<path d="M478.80,468.80L479.34,467.96L479.34,473.00M481.22,468.80L481.76,467.96L482.83,467.96L483.37,468.80L483.37,469.64L481.22,473.00L483.37,473.00M484.61,472.58L485.08,472.58L485.08,473.00L484.61,473.00ZM488.46,467.96L486.32,467.96L486.32,470.06L487.93,470.06L488.46,470.90L488.46,472.16L487.93,473.00L486.32,473.00" stroke="#ffffff" stroke-width="1" fill="none" stroke-linejoin="round" transform="rotate(-52 478 473)"/>
<polygon points="164.5,86.5 173.5,90.5 166,95.5" fill="none" stroke="#ff0000"/>
<line x1="173.5" y1="90.5" x2="185.5" y2="83.5" stroke="#ff0000" stroke-width="1"/>
<path d="M168.58,81.96L170.90,81.96L169.74,84.06L170.32,84.06L170.90,84.90L170.90,86.16L170.32,87.00L169.16,87.00L168.58,86.16M172.25,86.58L172.75,86.58L172.75,87.00L172.25,87.00ZM174.10,82.80L174.68,81.96L175.84,81.96L176.42,82.80L176.42,83.64L174.10,87.00L176.42,87.00" stroke="#ffffff" stroke-width="1" fill="none" stroke-linejoin="round" transform="rotate(-30 168 87)"/>
<path d="M474.58,312.96L476.90,312.96L475.74,315.06L476.32,315.06L476.90,315.90L476.90,317.16L476.32,318.00L475.16,318.00L474.58,317.16M478.25,317.58L478.75,317.58L478.75,318.00L478.25,318.00ZM480.10,313.80L480.68,312.96L481.84,312.96L482.42,313.80L482.42,314.64L480.10,318.00L482.42,318.00" stroke="#ffffff" stroke-width="1" fill="none" stroke-linejoin="round" transform="rotate(-62 474 318)"/>
<path d="M495.58,351.96L497.90,351.96L496.74,354.06L497.32,354.06L497.90,354.90L497.90,356.16L497.32,357.00L496.16,357.00L495.58,356.16M499.25,356.58L499.75,356.58L499.75,357.00L499.25,357.00ZM501.10,352.80L501.68,351.96L502.84,351.96L503.42,352.80L503.42,353.64L501.10,357.00L503.42,357.00" stroke="#ffffff" stroke-width="1" fill="none" stroke-linejoin="round" transform="rotate(90 495 357)"/>
<path d="M700.58,513.96L702.90,513.96L701.74,516.06L702.32,516.06L702.90,516.90L702.90,518.16L702.32,519.00L701.16,519.00L700.58,518.16M704.25,518.58L704.75,518.58L704.75,519.00L704.25,519.00ZM706.10,514.80L706.68,513.96L707.84,513.96L708.42,514.80L708.42,515.64L706.10,519.00L708.42,519.00" stroke="#ffffff" stroke-width="1" fill="none" stroke-linejoin="round" transform="rotate(90 700 519)"/>
<path d="M694.33,247.00L694.33,239.08L698.33,239.08L699.67,240.40L699.67,241.72L698.33,243.04L694.33,243.04M698.33,243.04L699.67,244.36L699.67,245.68L698.33,247.00L694.33,247.00" stroke="#ffffff" stroke-width="1" fill="none" stroke-linejoin="round"/>
<path d="M734.00,278.00L736.00,271.52L738.00,278.00M734.70,275.84L737.30,275.84" stroke="#ffffff" stroke-width="1" fill="none" stroke-linejoin="round" transform="rotate(-90 736 278)"/>
<path d="M819.91,249.50L821.19,248.00L821.19,257.00M826.05,256.25L827.16,256.25L827.16,257.00L826.05,257.00Z" stroke="#ffffff" stroke-width="1" fill="none" stroke-linejoin="round"/>
<path d="M818.86,266.50L819.71,265.00L821.43,265.00L822.29,266.50L822.29,268.00L818.86,274.00L822.29,274.00M824.27,273.25L825.02,273.25L825.02,274.00L824.27,274.00ZM828.1,265.0V274.0M826.5,267.7H829.4M826.9,270.6H829.3M826.9,273.6L827.9,271.8M830.5,267.8H833.5M830.5,271.4H833.4M830.3,271.6H833.2M831.4,265.3V273.4M831.7,269.1L829.9,273.6M831.7,269.5L833.5,273.6M835.8,265.0V274.0M834.2,267.7H837.2M834.2,272.6L835.8,269.1M835.8,269.1L837.2,271.3M838.2,268.9H841.1M838.3,272.6H840.6M838.6,266.8V273.8M839.4,269.1L837.6,273.6M839.4,269.5L841.2,273.6M837.7,268.1V273.1M841.2,268.1V273.1M843.5,265.0V274.0M842.0,267.7H844.9M842.3,270.6H844.7M842.3,273.6L843.3,271.8M846.1,266.9H848.2M845.3,267.4H848.5M846.2,267.7H848.6M845.5,272.8H848.8M846.5,268.2V271.9M847.1,269.1L845.3,273.6M845.4,268.1V273.1M848.9,268.1V273.1M850.3,270.1H855.7M850.3,272.7H856.5M852.5,267.8V273.5M853.1,269.1L849.7,273.6M853.1,269.5L856.6,273.6M857.7,269.5H864.3M857.4,272.4H864.1M860.9,265.1V273.0M861.0,266.0V273.7M860.9,269.1L857.4,273.6M865.57,274.00L865.57,265.00L868.14,265.00L869.00,266.50L869.00,268.00L868.14,269.50L865.57,269.50M867.29,269.50L869.00,274.00M870.71,265.00L874.14,265.00L872.43,268.75L873.29,268.75L874.14,270.25L874.14,272.50L873.29,274.00L871.57,274.00L870.71,272.50" stroke="#ffffff" stroke-width="1" fill="none" stroke-linejoin="round"/>
<path d="M818.83,281.00L822.15,281.00L820.49,284.75L821.32,284.75L822.15,286.25L822.15,288.50L821.32,290.00L819.66,290.00L818.83,288.50M824.08,289.25L824.80,289.25L824.80,290.00L824.08,290.00ZM828.39,280.55L828.39,290.45M827.56,282.50L829.22,282.50L830.05,284.00L830.05,287.00L829.22,288.50L827.56,288.50L826.72,287.00L826.72,284.00ZM832.54,281.00L834.20,281.00L835.03,282.50L835.03,284.00L834.20,285.50L832.54,285.50L831.71,284.00L831.71,282.50ZM832.54,285.50L831.71,287.00L831.71,288.50L832.54,290.00L834.20,290.00L835.03,288.50L835.03,287.00L834.20,285.50M837.7,281.0V290.0M836.2,283.7H839.1M836.2,288.6L837.7,285.1M837.7,285.1L839.1,287.3M839.5,285.2H842.4M840.4,285.8H842.6M841.0,281.1V289.4M841.2,285.1L839.5,289.6M841.2,285.5L843.0,289.6M844.3,282.5H850.3M843.9,283.6H850.0M848.0,281.4V288.5M847.1,285.1L843.7,289.6M852.7,281.0V290.0M851.2,283.7H854.0M851.5,286.6H853.9M851.5,289.6L852.5,287.8M854.8,281.5H857.7M855.3,285.1H857.2M855.0,288.5H857.4M854.7,289.5H857.7M855.8,282.3V289.7M854.6,284.1V289.1M857.9,284.1V289.1M860.2,281.0V290.0M858.7,283.7H861.5M859.0,286.6H861.4M859.0,289.6L860.0,287.8M862.5,282.3H865.2M862.2,283.6H865.0M862.4,284.7H864.7M862.0,288.9H864.9M863.0,281.6V288.8M863.7,285.5L865.4,289.6M867.6,281.0V290.0M866.1,283.7H869.0M866.1,288.6L867.6,285.1M867.6,285.1L869.0,287.3M869.9,282.2H872.1M869.7,286.9H872.0M871.2,282.3V289.3M871.3,282.2V289.8M871.1,285.1L869.4,289.6M871.1,285.5L872.9,289.6M875.1,281.0V290.0M873.6,283.7H876.5M874.0,286.6H876.3M874.0,289.6L875.0,287.8M877.0,281.7H879.6M876.9,281.9H879.5M877.8,283.4H879.8M877.8,287.7H879.7M877.7,284.0V287.5M878.1,283.2V288.9M878.6,285.1L876.9,289.6M878.6,285.5L880.4,289.6M882.6,281.0V290.0M881.1,283.7H883.9M881.4,286.6H883.8M881.4,289.6L882.5,287.8M885.1,281.8H887.0M885.3,283.2H887.3M885.3,287.4H886.9M886.0,284.0V288.8M886.4,283.8V289.9M886.1,285.1L884.3,289.6M886.1,285.5L887.8,289.6M884.5,284.1V289.1M887.8,284.1V289.1M890.1,281.0V290.0M888.6,283.7H891.4M888.6,288.6L890.1,285.1M890.1,285.1L891.4,287.3M892.6,283.3H894.9M892.5,286.5H894.6M892.3,289.0H895.3M892.0,289.5H894.9M892.9,283.1V287.3M893.6,285.1L891.8,289.6M893.6,285.5L895.3,289.6M897.5,281.0V290.0M896.1,283.7H898.9M896.1,288.6L897.5,285.1M897.5,285.1L898.9,287.3M899.9,283.6H902.3M899.7,284.8H902.6M899.4,287.3H902.7M901.1,284.2V289.8M901.0,285.5L902.8,289.6M899.4,284.1V289.1M902.8,284.1V289.1M903.6,282.1H910.1M904.0,282.3H909.6M903.9,283.3H910.3M903.8,286.6H909.4M908.0,281.4V287.3M906.4,283.8V288.1M906.9,285.1L903.5,289.6M906.9,285.5L910.3,289.6M903.7,284.1V289.1M910.3,284.1V289.1M911.8,287.7H917.2M911.5,287.8H917.3M911.4,288.2H917.4M911.6,288.5H917.3M914.1,282.2V287.9M914.5,281.7V289.3M914.4,285.1L911.0,289.6M914.4,285.5L917.7,289.6M911.2,284.1V289.1M917.7,284.1V289.1M918.95,282.50L919.78,281.00L921.44,281.00L922.28,282.50L922.28,288.50L921.44,290.00L919.78,290.00L918.95,288.50ZM924.20,289.25L924.92,289.25L924.92,290.00L924.20,290.00ZM926.85,282.50L927.68,281.00L929.34,281.00L930.17,282.50L930.17,284.00L926.85,290.00L930.17,290.00" stroke="#ffffff" stroke-width="1" fill="none" stroke-linejoin="round"/>
<path d="M821.37,306.00L821.37,297.00L818.84,303.00L822.22,303.00M824.17,305.25L824.90,305.25L824.90,306.00L824.17,306.00ZM828.54,296.55L828.54,306.45M827.70,298.50L829.38,298.50L830.22,300.00L830.22,303.00L829.38,304.50L827.70,304.50L826.85,303.00L826.85,300.00ZM832.75,297.00L834.44,297.00L835.28,298.50L835.28,300.00L834.44,301.50L832.75,301.50L831.91,300.00L831.91,298.50ZM832.75,301.50L831.91,303.00L831.91,304.50L832.75,306.00L834.44,306.00L835.28,304.50L835.28,303.00L834.44,301.50M838.0,297.0V306.0M836.5,299.7H839.4M836.5,304.6L838.0,301.1M838.0,301.1L839.4,303.3M839.9,301.2H842.8M840.7,301.8H843.0M841.3,297.1V305.4M841.6,301.1L839.8,305.6M841.6,301.5L843.3,305.6M844.7,298.5H850.8M844.3,299.6H850.5M848.4,297.4V304.5M847.5,301.1L844.1,305.6M851.8,301.1H858.2M852.2,305.2H857.6M855.5,299.7V304.4M854.9,297.9V304.1M860.8,297.0V306.0M859.3,299.7H862.1M859.6,302.6H862.0M859.6,305.6L860.6,303.8M862.6,297.9H865.1M863.2,300.0H866.1M862.8,300.1H866.1M862.6,302.3H865.3M864.7,297.4V303.4M863.6,300.1V303.7M864.3,301.1L862.5,305.6M864.3,301.5L866.1,305.6M868.4,297.0V306.0M866.9,299.7H869.7M867.2,302.6H869.6M867.2,305.6L868.2,303.8M870.5,297.5H873.5M871.1,301.1H873.0M870.7,304.5H873.2M870.5,305.5H873.5M871.5,298.3V305.7M870.3,300.1V305.1M873.7,300.1V305.1M875.9,297.0V306.0M874.4,299.7H877.3M874.8,302.6H877.2M874.8,305.6L875.8,303.8M878.3,298.3H881.1M878.0,299.6H880.9M878.2,300.7H880.5M877.9,304.9H880.7M878.8,297.6V304.8M879.5,301.5L881.3,305.6M882.2,299.3H888.4M882.2,300.3H888.8M883.1,300.6H888.7M882.9,303.9H888.0M885.5,300.3V305.2M886.4,297.3V305.3M890.5,300.1H895.4M889.8,301.5H895.5M890.0,302.8H895.7M890.4,302.8H896.2M892.0,297.6V304.4M893.0,301.1L889.6,305.6M893.0,301.5L896.4,305.6M889.8,300.1V305.1M896.4,300.1V305.1M898.7,297.0V306.0M897.2,299.7H900.1M897.2,304.6L898.7,301.1M898.7,301.1L900.1,303.3M901.1,297.6H903.5M900.7,303.8H903.8M901.7,300.5V305.6M901.4,298.8V304.0M902.3,301.1L900.5,305.6M902.3,301.5L904.0,305.6M900.6,300.1V305.1M904.0,300.1V305.1M905.5,298.3H910.9M905.6,298.5H911.3M905.6,299.3H911.3M905.3,301.8H910.9M909.9,297.9V303.5M908.2,301.5L911.6,305.6M904.9,300.1V305.1M911.6,300.1V305.1M913.0,300.2H918.4M913.3,303.3H918.6M915.3,298.5V304.5M915.8,301.1L912.4,305.6M912.5,300.1V305.1M919.2,300.1V305.1M920.44,298.50L921.28,297.00L922.96,297.00L923.81,298.50L923.81,300.00L920.44,306.00L923.81,306.00M925.49,297.00L928.87,297.00L927.18,300.75L928.02,300.75L928.87,302.25L928.87,304.50L928.02,306.00L926.34,306.00L925.49,304.50M931.6,297.0V306.0M930.1,299.7H933.0M930.1,304.6L931.6,301.1M931.6,301.1L933.0,303.3M933.9,302.5H936.7M933.4,303.1H936.0M935.3,297.9V304.0M935.6,297.8V303.8M935.1,301.1L933.4,305.6M935.1,301.5L936.9,305.6M939.2,297.0V306.0M937.7,299.7H940.5M937.7,304.6L939.2,301.1M939.2,301.1L940.5,303.3M941.3,297.7H943.8M941.3,300.3H943.8M942.5,300.2V303.9M943.2,297.4V303.7M942.7,301.1L941.0,305.6M942.7,301.5L944.5,305.6M947.41,296.55L947.41,306.45M946.57,298.50L948.26,298.50L949.10,300.00L949.10,303.00L948.26,304.50L946.57,304.50L945.73,303.00L945.73,300.00ZM950.79,298.50L951.63,297.00L953.32,297.00L954.16,298.50L954.16,300.00L950.79,306.00L954.16,306.00M955.85,298.50L956.69,297.00L958.37,297.00L959.22,298.50L959.22,300.00L955.85,306.00L959.22,306.00M961.9,297.0V306.0M960.4,299.7H963.3M960.8,302.6H963.2M960.8,305.6L961.8,303.8M964.5,298.0H966.6M964.6,305.1H966.6M963.8,305.1H967.2M965.5,298.4V304.3M965.5,298.2V304.2M965.5,301.1L963.7,305.6M965.5,301.5L967.3,305.6M969.5,297.0V306.0M968.0,299.7H970.9M968.0,304.6L969.5,301.1M969.5,301.1L970.9,303.3M971.6,297.7H974.1M971.7,300.3H974.1M972.9,300.2V303.9M973.5,297.4V303.7M973.1,301.1L971.3,305.6M973.1,301.5L974.9,305.6M976.0,300.2H982.2M976.3,302.3H982.4M976.5,304.6H982.2M978.3,298.3V305.9M979.0,301.1L975.6,305.6M979.0,301.5L982.4,305.6M975.8,300.1V305.1M982.4,300.1V305.1M984.7,297.0V306.0M983.2,299.7H986.1M983.2,304.6L984.7,301.1M984.7,301.1L986.1,303.3M987.1,299.6H989.5M986.9,300.8H989.8M986.6,303.3H990.0M988.3,300.2V305.8M988.3,301.5L990.0,305.6M986.6,300.1V305.1M990.0,300.1V305.1M992.3,297.0V306.0M990.8,299.7H993.7M990.8,304.6L992.3,301.1M992.3,301.1L993.7,303.3M994.6,302.5H997.4M994.1,303.1H996.7M996.0,297.9V304.0M996.3,297.8V303.8M995.8,301.1L994.1,305.6M995.8,301.5L997.6,305.6" stroke="#ffffff" stroke-width="1" fill="none" stroke-linejoin="round"/>
<path d="M819.9,314.0V323.0M818.4,316.7H821.2M818.7,319.6H821.1M818.7,322.6L819.7,320.8M821.7,315.8H824.2M822.2,317.9H824.5M822.1,320.1H824.5M822.6,321.3H824.5M823.7,316.2V320.6M825.9,319.4H831.8M826.1,320.3H831.9M826.3,321.9H832.3M828.4,317.5V320.8M828.3,314.7V322.0M829.3,318.1L825.9,322.6M834.1,317.2H839.4M834.4,320.3H839.6M836.4,315.5V321.5M836.9,318.1L833.5,322.6M833.6,317.1V322.1M840.3,317.1V322.1M841.9,315.8H846.8M841.5,318.8H847.2M844.0,316.2V321.3M845.5,314.8V322.2M844.4,318.5L847.8,322.6M841.1,317.1V322.1M847.8,317.1V322.1M848.6,319.4H854.4M848.7,320.3H854.5M848.9,321.9H855.0M851.0,317.5V320.8M850.9,314.7V322.0M851.9,318.1L848.5,322.6M856.97,315.50L857.81,314.00L857.81,323.00M860.74,315.50L861.58,314.00L863.26,314.00L864.10,315.50L864.10,321.50L863.26,323.00L861.58,323.00L860.74,321.50ZM865.77,315.50L866.61,314.00L868.29,314.00L869.12,315.50L869.12,321.50L868.29,323.00L866.61,323.00L865.77,321.50ZM871.8,314.0V323.0M870.3,316.7H873.2M870.7,319.6H873.1M870.7,322.6L871.7,320.8M874.0,315.7H876.9M874.6,317.6H876.7M874.5,322.2H876.3M875.6,314.5V322.8M874.7,317.0V322.8M875.4,318.1L873.6,322.6M875.4,318.5L877.1,322.6M879.4,314.0V323.0M877.9,316.7H880.7M877.9,321.6L879.4,318.1M879.4,318.1L880.7,320.3M881.8,316.6H884.2M881.5,317.8H884.4M881.3,320.3H884.6M882.9,317.2V322.8M882.9,318.5L884.7,322.6M881.3,317.1V322.1M884.7,317.1V322.1M885.5,315.1H892.1M885.8,315.3H891.5M885.8,316.3H892.2M885.7,319.6H891.3M889.9,314.4V320.3M888.3,316.8V321.1M888.8,318.1L885.4,322.6M888.8,318.5L892.2,322.6M885.6,317.1V322.1M892.2,317.1V322.1M893.7,320.7H899.2M893.5,320.8H899.3M893.4,321.2H899.4M893.5,321.5H899.3M896.1,315.2V320.9M896.5,314.7V322.3M896.4,318.1L893.0,322.6M896.4,318.5L899.8,322.6M893.1,317.1V322.1M899.8,317.1V322.1M900.97,315.50L901.81,314.00L903.49,314.00L904.32,315.50L904.32,321.50L903.49,323.00L901.81,323.00L900.97,321.50ZM906.26,322.25L907.00,322.25L907.00,323.00L906.26,323.00ZM908.93,315.50L909.77,314.00L911.45,314.00L912.29,315.50L912.29,317.00L908.93,323.00L912.29,323.00M914.59,322.25L914.00,324.50M916.7,319.1H923.0M917.3,322.0H922.4M920.3,315.3V322.9M919.8,318.1L916.4,322.6M919.8,318.5L923.2,322.6M924.2,316.3H930.3M924.2,317.3H930.7M925.0,317.6H930.6M924.8,320.9H929.9M927.4,317.3V322.2M928.3,314.3V322.3M932.4,317.1H937.3M931.7,318.5H937.4M931.9,319.8H937.5M932.3,319.8H938.0M933.9,314.6V321.4M934.9,318.1L931.5,322.6M934.9,318.5L938.3,322.6M931.7,317.1V322.1M938.3,317.1V322.1M940.6,314.0V323.0M939.1,316.7H941.9M939.1,321.6L940.6,318.1M940.6,318.1L941.9,320.3M942.9,314.6H945.3M942.6,320.8H945.7M943.5,317.5V322.6M943.2,315.8V321.0M944.1,318.1L942.3,322.6M944.1,318.5L945.9,322.6M942.5,317.1V322.1M945.9,317.1V322.1M947.3,315.3H952.6M947.4,315.5H953.0M947.4,316.3H953.1M947.1,318.8H952.6M951.7,314.9V320.5M950.0,318.5L953.4,322.6M946.7,317.1V322.1M953.4,317.1V322.1M954.7,317.2H960.1M955.1,320.3H960.3M957.0,315.5V321.5M957.5,318.1L954.1,322.6M954.3,317.1V322.1M960.9,317.1V322.1M962.15,314.00L965.50,314.00L963.41,323.00M968.02,314.00L969.70,314.00L970.53,315.50L970.53,317.00L969.70,318.50L968.02,318.50L967.18,317.00L967.18,315.50ZM968.02,318.50L967.18,320.00L967.18,321.50L968.02,323.00L969.70,323.00L970.53,321.50L970.53,320.00L969.70,318.50M972.1,317.2H978.3M972.5,319.3H978.5M972.6,321.6H978.3M974.4,315.3V322.9M975.1,318.1L971.7,322.6M975.1,318.5L978.5,322.6M971.9,317.1V322.1M978.5,317.1V322.1M980.8,314.0V323.0M979.3,316.7H982.1M979.3,321.6L980.8,318.1M980.8,318.1L982.1,320.3M983.1,319.5H985.8M982.6,320.1H985.1M984.4,314.9V321.0M984.7,314.8V320.8M984.3,318.1L982.5,322.6M984.3,318.5L986.1,322.6M988.3,314.0V323.0M986.8,316.7H989.7M987.2,319.6H989.5M987.2,322.6L988.2,320.8M990.5,316.5H993.2M990.6,318.9H993.3M992.6,315.3V322.8M991.3,315.2V321.5M991.9,318.1L990.1,322.6M991.9,318.5L993.6,322.6" stroke="#ffffff" stroke-width="1" fill="none" stroke-linejoin="round"/>
<path d="M820.55,328.55L820.55,338.45M819.70,330.50L821.40,330.50L822.25,332.00L822.25,335.00L821.40,336.50L819.70,336.50L818.85,335.00L818.85,332.00ZM823.95,330.50L824.80,329.00L826.50,329.00L827.35,330.50L827.35,332.00L823.95,338.00L827.35,338.00M829.05,330.50L829.90,329.00L831.60,329.00L832.45,330.50L832.45,332.00L829.05,338.00L832.45,338.00M835.2,329.0V338.0M833.7,331.7H836.6M834.0,334.6H836.4M834.0,337.6L835.1,335.8M837.8,330.0H839.9M837.9,337.1H839.9M837.1,337.1H840.5M838.7,330.4V336.3M838.7,330.2V336.2M838.8,333.1L837.0,337.6M838.8,333.5L840.6,337.6M842.8,329.0V338.0M841.3,331.7H844.2M841.3,336.6L842.8,333.1M842.8,333.1L844.2,335.3M844.9,329.7H847.5M845.0,332.3H847.5M846.2,332.2V335.9M846.9,329.4V335.7M846.4,333.1L844.6,337.6M846.4,333.5L848.2,337.6M849.3,332.2H855.6M849.7,334.3H855.8M849.9,336.6H855.6M851.7,330.3V337.9M852.4,333.1L849.0,337.6M852.4,333.5L855.9,337.6M849.1,332.1V337.1M855.9,332.1V337.1M858.1,329.0V338.0M856.6,331.7H859.5M856.6,336.6L858.1,333.1M858.1,333.1L859.5,335.3M860.6,331.6H863.0M860.3,332.8H863.3M860.1,335.3H863.5M861.8,332.2V337.8M861.7,333.5L863.5,337.6M860.1,332.1V337.1M863.5,332.1V337.1M865.8,329.0V338.0M864.3,331.7H867.2M864.3,336.6L865.8,333.1M865.8,333.1L867.2,335.3M868.1,334.5H870.9M867.6,335.1H870.2M869.5,329.9V336.0M869.8,329.8V335.8M869.4,333.1L867.6,337.6M869.4,333.5L871.2,337.6M873.4,329.0V338.0M871.9,331.7H874.8M872.3,334.6H874.7M872.3,337.6L873.3,335.8M875.3,330.8H877.8M875.8,332.9H878.2M875.7,335.1H878.1M876.2,336.3H878.1M877.3,331.2V335.6M879.6,334.4H885.5M879.7,335.3H885.6M880.0,336.9H886.1M882.0,332.5V335.8M882.0,329.7V337.0M883.0,333.1L879.6,337.6M888.1,332.1H893.1M887.4,333.5H893.2M887.6,334.8H893.3M888.0,334.8H893.8M889.7,329.6V336.4M890.7,333.1L887.2,337.6M890.7,333.5L894.1,337.6M887.4,332.1V337.1M894.1,332.1V337.1M895.8,330.8H900.8M895.4,333.8H901.2M897.9,331.2V336.3M899.5,329.8V337.2M898.3,333.5L901.8,337.6M895.0,332.1V337.1M901.8,332.1V337.1M902.5,334.4H908.4M902.7,335.3H908.5M902.9,336.9H909.0M905.0,332.5V335.8M904.9,329.7V337.0M906.0,333.1L902.5,337.6M911.06,330.50L911.91,329.00L911.91,338.00M914.88,330.50L915.73,329.00L917.43,329.00L918.28,330.50L918.28,336.50L917.43,338.00L915.73,338.00L914.88,336.50ZM919.98,330.50L920.83,329.00L922.53,329.00L923.38,330.50L923.38,336.50L922.53,338.00L920.83,338.00L919.98,336.50ZM926.1,329.0V338.0M924.6,331.7H927.5M925.0,334.6H927.4M925.0,337.6L926.0,335.8M928.3,330.7H931.2M928.9,332.6H931.1M928.8,337.2H930.6M930.0,329.5V337.8M929.1,332.0V337.8M929.7,333.1L927.9,337.6M929.7,333.5L931.5,337.6M933.8,329.0V338.0M932.3,331.7H935.2M932.3,336.6L933.8,333.1M933.8,333.1L935.2,335.3M936.2,331.6H938.7M936.0,332.8H938.9M935.7,335.3H939.1M937.4,332.2V337.8M937.4,333.5L939.1,337.6M935.7,332.1V337.1M939.1,332.1V337.1M940.0,330.1H946.6M940.3,330.3H946.1M940.3,331.3H946.8M940.2,334.6H945.9M944.5,329.4V335.3M942.9,331.8V336.1M943.4,333.1L939.9,337.6M943.4,333.5L946.8,337.6M940.0,332.1V337.1M946.8,332.1V337.1M948.3,335.7H953.9M948.1,335.8H953.9M948.0,336.2H954.1M948.1,336.5H953.9M950.7,330.2V335.9M951.1,329.7V337.3M951.0,333.1L947.6,337.6M951.0,333.5L954.4,337.6M947.7,332.1V337.1M954.4,332.1V337.1M955.68,330.50L956.53,329.00L958.23,329.00L959.08,330.50L959.08,336.50L958.23,338.00L956.53,338.00L955.68,336.50ZM961.04,337.25L961.79,337.25L961.79,338.00L961.04,338.00ZM966.30,338.00L966.30,329.00L963.75,335.00L967.15,335.00" stroke="#ffffff" stroke-width="1" fill="none" stroke-linejoin="round"/>
<path d="M822.59,346.00L818.92,346.00L818.92,349.75L821.67,349.75L822.59,351.25L822.59,353.50L821.67,355.00L818.92,355.00M824.71,354.25L825.52,354.25L825.52,355.00L824.71,355.00ZM828.1,349.1H833.5M827.3,350.5H833.6M827.5,351.8H833.7M828.0,351.8H834.3M829.8,346.6V353.4M830.9,350.1L827.1,354.6M830.9,350.5L834.6,354.6M827.3,349.1V354.1M834.6,349.1V354.1M835.91,355.00L835.91,346.00L838.66,346.00L839.58,347.50L839.58,349.00L838.66,350.50L835.91,350.50M838.66,350.50L839.58,352.00L839.58,353.50L838.66,355.00L835.91,355.00M842.5,346.0V355.0M840.9,348.7H844.0M840.9,353.6L842.5,350.1M842.5,350.1L844.0,352.3M844.8,349.1H847.6M844.6,351.1H848.0M846.1,349.0V353.9M846.4,350.1L844.5,354.6M850.8,346.0V355.0M849.2,348.7H852.3M849.5,351.6H852.2M849.5,354.6L850.7,352.8M853.1,347.7H856.3M853.9,349.6H856.2M853.7,354.2H855.7M855.0,346.5V354.8M854.0,349.0V354.8M854.7,350.1L852.7,354.6M854.7,350.5L856.6,354.6M859.78,345.55L859.78,355.45M858.86,347.50L860.70,347.50L861.62,349.00L861.62,352.00L860.70,353.50L858.86,353.50L857.94,352.00L857.94,349.00ZM864.37,346.00L866.21,346.00L867.13,347.50L867.13,349.00L866.21,350.50L864.37,350.50L863.45,349.00L863.45,347.50ZM864.37,350.50L863.45,352.00L863.45,353.50L864.37,355.00L866.21,355.00L867.13,353.50L867.13,352.00L866.21,350.50M868.9,347.1H875.4M868.7,347.2H875.4M869.0,351.8H874.8M871.3,347.7V354.3M872.6,347.0V352.8M868.6,349.1V354.1M875.9,349.1V354.1M879.06,345.55L879.06,355.45M878.15,347.50L879.98,347.50L880.90,349.00L880.90,352.00L879.98,353.50L878.15,353.50L877.23,352.00L877.23,349.00ZM883.20,347.50L884.12,346.00L884.12,355.00M891.00,346.00L887.33,346.00L887.33,349.75L890.08,349.75L891.00,351.25L891.00,353.50L890.08,355.00L887.33,355.00M894.0,346.0V355.0M892.3,348.7H895.5M892.7,351.6H895.3M892.7,354.6L893.8,352.8M896.7,347.0H899.0M896.9,354.1H899.1M896.0,354.1H899.7M897.8,347.4V353.3M897.8,347.2V353.2M897.8,350.1L895.9,354.6M897.8,350.5L899.8,354.6M902.2,346.0V355.0M900.6,348.7H903.7M900.6,353.6L902.2,350.1M902.2,350.1L903.7,352.3M904.5,346.7H907.2M904.6,349.3H907.3M905.9,349.2V352.9M906.6,346.4V352.7M906.1,350.1L904.2,354.6M906.1,350.5L908.0,354.6M909.9,346.5H915.6M909.4,347.0H915.5M909.4,354.4H915.4M910.9,349.5V354.3M913.0,347.4V354.5M912.6,350.1L908.9,354.6M909.0,349.1V354.1M916.3,349.1V354.1M917.5,349.2H924.3M917.9,351.3H924.5M918.1,353.6H924.3M920.0,347.3V354.9M920.8,350.1L917.1,354.6M920.8,350.5L924.6,354.6M917.3,349.1V354.1M924.6,349.1V354.1M927.0,346.0V355.0M925.4,348.7H928.5M925.8,351.6H928.4M925.8,354.6L926.9,352.8M929.7,348.4H932.1M929.1,351.2H931.9M931.8,348.4V353.5M930.2,346.2V354.4M930.9,350.1L929.0,354.6M929.1,349.1V354.1M932.8,349.1V354.1M934.5,348.4H940.7M933.8,349.5H940.3M939.0,346.8V354.6M936.2,348.0V352.8M937.4,350.1L933.7,354.6M937.4,350.5L941.1,354.6M933.8,349.1V354.1M941.1,349.1V354.1M942.0,346.6H948.6M942.5,347.5H948.5M942.6,353.8H948.6M946.3,346.9V354.3M946.4,348.2V354.6M945.6,350.1L941.9,354.6M951.2,349.1H956.5M950.4,350.5H956.6M950.6,351.8H956.8M951.1,351.8H957.3M952.8,346.6V353.4M953.9,350.1L950.2,354.6M953.9,350.5L957.6,354.6M950.3,349.1V354.1M957.6,349.1V354.1M958.95,347.50L959.87,346.00L961.71,346.00L962.63,347.50L962.63,349.00L958.95,355.00L962.63,355.00M964.75,354.25L965.55,354.25L965.55,355.00L964.75,355.00ZM971.35,346.00L967.68,346.00L967.68,349.75L970.43,349.75L971.35,351.25L971.35,353.50L970.43,355.00L967.68,355.00M972.27,350.50L977.78,350.50M977.78,350.50L983.29,350.50M986.96,355.00L986.96,346.00L984.21,352.00L987.88,352.00M990.00,354.25L990.81,354.25L990.81,355.00L990.00,355.00ZM992.93,347.50L993.85,346.00L995.69,346.00L996.60,347.50L996.60,353.50L995.69,355.00L993.85,355.00L992.93,353.50ZM999.6,346.0V355.0M997.9,348.7H1001.1M998.3,351.6H1000.9M998.3,354.6L999.4,352.8M1002.0,348.5H1004.9M1002.1,350.9H1005.0M1004.3,347.3V354.8M1002.9,347.2V353.5M1003.4,350.1L1001.5,354.6M1003.4,350.5L1005.4,354.6M1007.39,354.25L1006.75,356.50" stroke="#ffffff" stroke-width="1" fill="none" stroke-linejoin="round"/>
<path d="M819.1,363.3H824.5M818.8,367.1H824.6M819.1,367.5H824.7M818.9,368.8H824.5M822.8,365.5V369.4M821.6,366.1L818.4,370.6M821.6,366.5L824.8,370.6M826.9,362.0V371.0M825.5,364.7H828.2M825.8,367.6H828.1M825.8,370.6L826.8,368.8M829.5,363.2H831.3M829.4,365.3H831.4M829.1,367.8H831.1M830.2,362.0V370.9M830.3,366.1L828.6,370.6M830.3,366.5L832.0,370.6M833.0,362.6H838.6M832.9,363.5H838.8M832.9,364.9H838.3M832.8,369.1H838.9M837.2,365.0V370.3M836.4,362.5V369.4M835.9,366.1L832.7,370.6M832.8,365.1V370.1M839.1,365.1V370.1M840.0,362.6H846.2M840.4,364.3H845.4M840.7,370.5H845.3M844.4,364.5V370.0M842.4,364.2V370.2M843.1,366.5L846.3,370.6M847.4,365.2H853.2M847.7,367.3H853.4M847.8,369.6H853.2M849.6,363.3V370.9M850.2,366.1L847.0,370.6M850.2,366.5L853.5,370.6M847.2,365.1V370.1M853.5,365.1V370.1M854.9,364.4H860.3M854.3,365.5H859.9M858.9,362.8V370.6M856.4,364.0V368.8M857.4,366.1L854.2,370.6M857.4,366.5L860.6,370.6M854.3,365.1V370.1M860.6,365.1V370.1M861.4,367.4H866.9M861.5,368.3H867.0M861.7,369.9H867.4M863.7,365.5V368.8M863.6,362.7V370.0M864.6,366.1L861.4,370.6M869.9,362.0V371.0M868.5,364.7H871.2M868.5,369.6L869.9,366.1M869.9,366.1L871.2,368.3M872.2,364.6H874.5M872.0,365.8H874.7M871.8,368.3H874.9M873.3,365.2V370.8M873.3,366.5L875.0,370.6M871.7,365.1V370.1M875.0,365.1V370.1M877.1,362.0V371.0M875.7,364.7H878.4M875.7,369.6L877.1,366.1M877.1,366.1L878.4,368.3M879.4,363.9H881.5M879.7,367.2H881.8M878.8,367.6H881.3M879.1,370.4H881.3M880.2,365.5V370.1M880.5,363.2V368.3M880.5,366.1L878.8,370.6M880.5,366.5L882.1,370.6M883.6,368.7H888.7M883.3,368.8H888.8M883.2,369.2H889.0M883.4,369.5H888.8M885.8,363.2V368.9M886.2,362.7V370.3M886.1,366.1L882.9,370.6M886.1,366.5L889.3,370.6M883.0,365.1V370.1M889.3,365.1V370.1M890.45,363.50L891.25,362.00L892.84,362.00L893.64,363.50L893.64,365.00L890.45,371.00L893.64,371.00M895.48,370.25L896.18,370.25L896.18,371.00L895.48,371.00ZM901.20,362.00L898.02,362.00L898.02,365.75L900.41,365.75L901.20,367.25L901.20,369.50L900.41,371.00L898.02,371.00" stroke="#ffffff" stroke-width="1" fill="none" stroke-linejoin="round"/>
<path d="M821.75,379.00L819.66,379.00L818.83,380.50L818.83,386.50L819.66,388.00L821.33,388.00L822.16,386.50L822.16,384.25L821.33,382.75L818.83,382.75M824.09,387.25L824.82,387.25L824.82,388.00L824.09,388.00ZM826.74,388.00L828.41,379.00L830.07,388.00M827.32,385.00L829.49,385.00M832.8,379.0V388.0M831.3,381.7H834.1M831.3,386.6L832.8,383.1M832.8,383.1L834.1,385.3M835.1,379.6H837.5M834.8,385.8H837.8M835.7,382.5V387.6M835.4,380.8V386.0M836.3,383.1L834.5,387.6M836.3,383.5L838.0,387.6M834.6,382.1V387.1M838.0,382.1V387.1M839.5,380.3H844.8M839.5,380.5H845.1M839.5,381.3H845.2M839.2,383.8H844.8M843.8,379.9V385.5M842.1,383.5L845.5,387.6M838.9,382.1V387.1M845.5,382.1V387.1M847.7,379.0V388.0M846.3,381.7H849.1M846.6,384.6H849.0M846.6,387.6L847.6,385.8M849.9,381.5H852.6M850.0,383.9H852.6M852.0,380.3V387.8M850.7,380.2V386.5M851.3,383.1L849.5,387.6M851.3,383.5L853.0,387.6M855.2,379.0V388.0M853.8,381.7H856.6M853.8,386.6L855.2,383.1M855.2,383.1L856.6,385.3M857.5,380.2H859.8M857.4,384.9H859.6M858.8,380.3V387.3M858.9,380.2V387.8M858.7,383.1L857.0,387.6M858.7,383.5L860.5,387.6M862.7,379.0V388.0M861.2,381.7H864.1M861.2,386.6L862.7,383.1M862.7,383.1L864.1,385.3M865.0,380.8H867.9M864.6,381.6H867.7M864.9,382.4H867.7M864.6,387.3H867.9M866.8,380.0V386.9M865.8,382.4V385.8M866.2,383.1L864.5,387.6M866.2,383.5L868.0,387.6M864.6,382.1V387.1M868.0,382.1V387.1M870.2,379.0V388.0M868.7,381.7H871.6M868.7,386.6L870.2,383.1M870.2,383.1L871.6,385.3M872.6,381.6H875.0M872.4,382.8H875.3M872.1,385.3H875.4M873.8,382.2V387.8M873.7,383.5L875.5,387.6M872.1,382.1V387.1M875.5,382.1V387.1M876.3,380.1H882.8M876.6,380.3H882.3M876.6,381.3H883.0M876.5,384.6H882.1M880.7,379.4V385.3M879.1,381.8V386.1M879.6,383.1L876.2,387.6M879.6,383.5L883.0,387.6M876.4,382.1V387.1M883.0,382.1V387.1M884.5,385.7H889.9M884.2,385.8H890.0M884.1,386.2H890.1M884.3,386.5H890.0M886.8,380.2V385.9M887.2,379.7V387.3M887.1,383.1L883.7,387.6M887.1,383.5L890.5,387.6M883.9,382.1V387.1M890.5,382.1V387.1M892.09,380.50L892.92,379.00L892.92,388.00" stroke="#ffffff" stroke-width="1" fill="none" stroke-linejoin="round"/>
<path d="M818.83,396.00L822.17,396.00L820.08,405.00M824.10,404.25L824.83,404.25L824.83,405.00L824.10,405.00ZM827.8,396.0V405.0M826.3,398.7H829.1M826.6,401.6H829.0M826.6,404.6L827.6,402.8M830.1,398.8H833.0M830.2,402.4H833.0M830.0,402.6H832.8M831.0,396.3V404.4M831.3,400.1L829.5,404.6M831.3,400.5L833.0,404.6M835.3,396.0V405.0M833.8,398.7H836.6M833.8,403.6L835.3,400.1M835.3,400.1L836.6,402.3M837.6,399.9H840.5M837.7,403.6H839.9M838.0,397.8V404.8M838.8,400.1L837.0,404.6M838.8,400.5L840.6,404.6M837.2,399.1V404.1M840.6,399.1V404.1M842.8,396.0V405.0M841.3,398.7H844.1M841.6,401.6H844.0M841.6,404.6L842.7,402.8M845.3,397.9H847.3M844.6,398.4H847.6M845.4,398.7H847.7M844.8,403.8H847.9M845.8,399.2V402.9M846.3,400.1L844.5,404.6M844.7,399.1V404.1M848.1,399.1V404.1M848.9,400.1H855.3M849.3,404.2H854.7M852.6,398.7V403.4M852.0,396.9V403.1M857.8,396.0V405.0M856.3,398.7H859.1M856.3,403.6L857.8,400.1M857.8,400.1L859.1,402.3M860.1,397.8H863.0M859.7,398.6H862.8M859.9,399.4H862.8M859.7,404.3H863.0M861.9,397.0V403.9M860.9,399.4V402.8M861.3,400.1L859.6,404.6M861.3,400.5L863.1,404.6M859.7,399.1V404.1M863.1,399.1V404.1M865.3,396.0V405.0M863.8,398.7H866.7M863.8,403.6L865.3,400.1M865.3,400.1L866.7,402.3M867.7,396.6H870.1M867.3,402.8H870.4M868.2,399.5V404.6M867.9,397.8V403.0M868.8,400.1L867.1,404.6M868.8,400.5L870.6,404.6M867.2,399.1V404.1M870.6,399.1V404.1M872.0,397.3H877.3M872.1,397.5H877.7M872.1,398.3H877.8M871.8,400.8H877.3M876.4,396.9V402.5M874.7,400.5L878.1,404.6M871.5,399.1V404.1M878.1,399.1V404.1M879.2,399.2H885.3M879.5,401.3H885.5M879.7,403.6H885.3M881.5,397.3V404.9M882.2,400.1L878.8,404.6M882.2,400.5L885.6,404.6M879.0,399.1V404.1M885.6,399.1V404.1M886.4,400.1H892.8M886.8,404.2H892.2M890.1,398.7V403.4M889.5,396.9V403.1M895.3,396.0V405.0M893.8,398.7H896.7M893.8,403.6L895.3,400.1M895.3,400.1L896.7,402.3M897.6,397.8H900.5M897.2,398.6H900.3M897.5,399.4H900.3M897.2,404.3H900.5M899.4,397.0V403.9M898.4,399.4V402.8M898.8,400.1L897.1,404.6M898.8,400.5L900.6,404.6M897.2,399.1V404.1M900.6,399.1V404.1M902.05,399.00L902.78,399.00M902.05,404.55L902.78,404.55M905.13,399.00L907.21,399.00L908.05,400.50L908.05,405.00L905.55,405.00L904.71,403.50L904.71,402.75L905.55,402.00L908.05,402.00M909.88,395.25L911.13,397.50L911.13,403.50L909.88,405.75M916.65,404.25L917.38,404.25L917.38,405.00L916.65,405.00ZM919.0,398.3H925.2M919.0,399.3H925.5M919.9,399.6H925.4M919.7,402.9H924.7M922.3,399.3V404.2M923.1,396.3V404.3M927.8,396.0V405.0M926.3,398.7H929.2M926.7,401.6H929.1M926.7,404.6L927.7,402.8M930.3,400.6H932.5M930.1,402.1H932.7M930.9,398.4V403.1M931.3,400.1L929.6,404.6M931.3,400.5L933.1,404.6M929.7,399.1V404.1M933.1,399.1V404.1M935.3,396.0V405.0M933.9,398.7H936.7M933.9,403.6L935.3,400.1M935.3,400.1L936.7,402.3M937.8,399.1H939.8M937.9,403.1H939.7M937.3,404.5H940.2M939.7,397.5V404.1M938.9,400.1L937.1,404.6M937.2,399.1V404.1M940.6,399.1V404.1M942.8,396.0V405.0M941.4,398.7H944.2M941.4,403.6L942.8,400.1M942.8,400.1L944.2,402.3M945.2,396.7H947.8M944.7,404.2H947.6M945.9,396.0V402.8M946.4,400.1L944.6,404.6M946.4,400.5L948.1,404.6M950.3,396.0V405.0M948.9,398.7H951.7M949.2,401.6H951.6M949.2,404.6L950.2,402.8M952.9,397.0H954.9M953.0,404.1H955.0M952.2,404.1H955.5M953.8,397.4V403.3M953.8,397.2V403.2M953.9,400.1L952.1,404.6M953.9,400.5L955.6,404.6M957.9,396.0V405.0M956.4,398.7H959.2M956.4,403.6L957.9,400.1M957.9,400.1L959.2,402.3M959.9,396.7H962.4M960.0,399.3H962.4M961.2,399.2V402.9M961.8,396.4V402.7M961.4,400.1L959.6,404.6M961.4,400.5L963.1,404.6M964.5,399.2H969.8M964.8,402.3H970.0M966.8,397.5V403.5M967.2,400.1L963.9,404.6M964.0,399.1V404.1M970.6,399.1V404.1M971.83,397.50L972.66,396.00L974.33,396.00L975.17,397.50L975.17,399.00L973.50,401.25L973.50,402.75M973.17,404.40L973.83,404.40L973.83,405.00L973.17,405.00Z" stroke="#ffffff" stroke-width="1" fill="none" stroke-linejoin="round"/>
<path d="M904.84,412.00L904.84,421.00L907.37,421.00L908.21,419.50L908.21,416.50L907.37,415.00L904.84,415.00M910.06,411.25L911.32,413.50L911.32,419.50L910.06,421.75M916.89,420.25L917.62,420.25L917.62,421.00L916.89,421.00ZM919.3,414.3H925.5M919.3,415.3H925.9M920.1,415.6H925.7M919.9,418.9H925.0M922.6,415.3V420.2M923.4,412.3V420.3M928.2,412.0V421.0M926.7,414.7H929.5M926.7,419.6L928.2,416.1M928.2,416.1L929.5,418.3M930.6,415.1H932.7M930.8,419.1H932.6M930.1,420.5H933.1M932.6,413.5V420.1M931.7,416.1L930.0,420.6M930.1,415.1V420.1M933.5,415.1V420.1M935.8,412.0V421.0M934.3,414.7H937.1M934.3,419.6L935.8,416.1M935.8,416.1L937.1,418.3M938.1,412.7H940.8M937.6,420.2H940.5M938.8,412.0V418.8M939.3,416.1L937.5,420.6M939.3,416.5L941.1,420.6M943.3,412.0V421.0M941.8,414.7H944.7M942.2,417.6H944.6M942.2,420.6L943.2,418.8M945.9,413.0H947.9M946.0,420.1H948.0M945.2,420.1H948.6M946.8,413.4V419.3M946.9,413.2V419.2M946.9,416.1L945.1,420.6M946.9,416.5L948.6,420.6M950.9,412.0V421.0M949.4,414.7H952.3M949.4,419.6L950.9,416.1M950.9,416.1L952.3,418.3M953.0,412.7H955.5M953.0,415.3H955.5M954.3,415.2V418.9M954.9,412.4V418.7M954.5,416.1L952.7,420.6M954.5,416.5L956.2,420.6M958.5,412.0V421.0M957.0,414.7H959.8M957.0,419.6L958.5,416.1M958.5,416.1L959.8,418.3M960.3,416.1H963.5M960.5,416.9H963.2M960.7,418.4H963.7M960.6,418.9H963.0M961.5,412.7V420.7M962.1,412.2V420.6M962.0,416.1L960.3,420.6M965.86,412.00L965.86,421.00M968.38,412.00L971.75,412.00M970.07,412.00L970.07,421.00M973.86,413.50L974.70,412.00L974.70,421.00M980.17,421.00L980.17,412.00L977.64,418.00L981.01,418.00M983.7,412.0V421.0M982.2,414.7H985.1M982.2,419.6L983.7,416.1M983.7,416.1L985.1,418.3M986.2,415.1H988.2M986.4,419.1H988.1M985.7,420.5H988.6M988.1,413.5V420.1M987.3,416.1L985.5,420.6M985.6,415.1V420.1M989.0,415.1V420.1M991.3,412.0V421.0M989.8,414.7H992.7M989.8,419.6L991.3,416.1M991.3,416.1L992.7,418.3M993.7,412.7H996.3M993.1,420.2H996.1M994.3,412.0V418.8M994.8,416.1L993.1,420.6M994.8,416.5L996.6,420.6" stroke="#ffffff" stroke-width="1" fill="none" stroke-linejoin="round"/>
<line x1="590.5" y1="559.5" x2="1035.5" y2="559.5" stroke="#ffffff" stroke-width="1"/>
<line x1="590.5" y1="559.5" x2="590.5" y2="694.5" stroke="#ffffff" stroke-width="1"/>
<line x1="590.5" y1="576.5" x2="739.5" y2="576.5" stroke="#ffffff" stroke-width="1"/>
<line x1="590.5" y1="594.5" x2="739.5" y2="594.5" stroke="#ffffff" stroke-width="1"/>
<line x1="590.5" y1="611.5" x2="739.5" y2="611.5" stroke="#ffffff" stroke-width="1"/>
<line x1="590.5" y1="628.5" x2="739.5" y2="628.5" stroke="#ffffff" stroke-width="1"/>
<line x1="590.5" y1="645.5" x2="739.5" y2="645.5" stroke="#ffffff" stroke-width="1"/>
<line x1="590.5" y1="663.5" x2="739.5" y2="663.5" stroke="#ffffff" stroke-width="1"/>
<line x1="590.5" y1="681.5" x2="739.5" y2="681.5" stroke="#ffffff" stroke-width="1"/>
<line x1="615.5" y1="559.5" x2="615.5" y2="628.5" stroke="#ffffff" stroke-width="1"/>
<line x1="637.5" y1="559.5" x2="637.5" y2="628.5" stroke="#ffffff" stroke-width="1"/>
<line x1="686.5" y1="559.5" x2="686.5" y2="628.5" stroke="#ffffff" stroke-width="1"/>
<line x1="712.5" y1="559.5" x2="712.5" y2="628.5" stroke="#ffffff" stroke-width="1"/>
<line x1="620.5" y1="628.5" x2="620.5" y2="694.5" stroke="#ffffff" stroke-width="1"/>
<line x1="659.5" y1="628.5" x2="659.5" y2="694.5" stroke="#ffffff" stroke-width="1"/>
<line x1="694.5" y1="628.5" x2="694.5" y2="694.5" stroke="#ffffff" stroke-width="1"/>
<line x1="739.5" y1="559.5" x2="739.5" y2="694.5" stroke="#ffffff" stroke-width="1"/>
<line x1="887.5" y1="559.5" x2="887.5" y2="694.5" stroke="#ffffff" stroke-width="1"/>
<line x1="739.5" y1="628.5" x2="887.5" y2="628.5" stroke="#ffffff" stroke-width="1"/>
<line x1="739.5" y1="653.5" x2="887.5" y2="653.5" stroke="#ffffff" stroke-width="1"/>
<line x1="739.5" y1="675.5" x2="887.5" y2="675.5" stroke="#ffffff" stroke-width="1"/>
<line x1="818.5" y1="628.5" x2="818.5" y2="675.5" stroke="#ffffff" stroke-width="1"/>
<line x1="848.5" y1="628.5" x2="848.5" y2="675.5" stroke="#ffffff" stroke-width="1"/>
<line x1="760.5" y1="653.5" x2="760.5" y2="675.5" stroke="#ffffff" stroke-width="1"/>
<line x1="777.5" y1="653.5" x2="777.5" y2="675.5" stroke="#ffffff" stroke-width="1"/>
<line x1="793.5" y1="653.5" x2="793.5" y2="675.5" stroke="#ffffff" stroke-width="1"/>
<line x1="887.5" y1="604.5" x2="1035.5" y2="604.5" stroke="#ffffff" stroke-width="1"/>
<line x1="887.5" y1="653.5" x2="1035.5" y2="653.5" stroke="#ffffff" stroke-width="1"/>
<path d="M593.9,614.1H601.1M593.2,615.1H600.5M593.8,618.4H600.9M593.5,624.1H600.1M595.5,616.7V623.2M597.3,615.4V625.3M597.2,619.1L593.1,625.4M597.2,619.8L601.3,625.4M603.4,614.6H609.3M602.9,624.5H610.0M604.7,615.2V623.7M606.3,615.0V622.5M606.4,619.1L602.3,625.4M602.4,617.9V624.8M610.5,617.9V624.8" stroke="#ffffff" stroke-width="1" fill="none" stroke-linejoin="round"/>
<path d="M620.0,613.5V626.0M618.2,617.2H621.7M618.2,624.1L620.0,619.1M620.0,619.1L621.7,622.2M622.6,617.8H626.4M622.6,620.6H625.3M622.7,623.4H626.1M622.7,624.6H625.4M624.9,615.8V623.4M624.7,616.8V624.8M624.3,619.1L622.2,625.4M624.3,619.8L626.5,625.4M629.2,613.5V626.0M627.4,617.2H630.9M627.4,624.1L629.2,619.1M629.2,619.1L630.9,622.2M632.6,614.3H635.7M632.3,624.5H635.2M634.6,616.1V625.6M633.6,619.1L631.4,625.4M633.6,619.8L635.7,625.4" stroke="#ffffff" stroke-width="1" fill="none" stroke-linejoin="round"/>
<path d="M640.6,613.5V626.0M638.8,617.2H642.2M639.2,621.2H642.0M639.2,625.4L640.4,622.9M642.9,617.2H646.5M642.9,621.9H646.4M643.2,624.4H645.9M645.5,615.7V622.4M644.8,619.1L642.7,625.4M644.8,619.8L647.0,625.4M649.7,613.5V626.0M647.9,617.2H651.4M648.3,621.2H651.2M648.3,625.4L649.5,622.9M652.0,614.2H655.4M652.6,617.0H655.3M651.9,618.8H655.3M652.5,624.4H655.2M654.1,616.6V624.5M654.0,619.8L656.1,625.4M658.8,613.5V626.0M657.0,617.2H660.5M657.0,624.1L658.8,619.1M658.8,619.1L660.5,622.2M661.4,615.6H664.7M662.0,617.0H664.7M661.9,623.0H664.5M661.2,624.1H664.6M662.5,617.5V625.3M663.1,619.1L661.0,625.4M663.1,619.8L665.3,625.4M661.1,617.9V624.8M665.3,617.9V624.8M667.0,614.4H673.7M667.3,620.1H673.4M666.2,622.9H674.1M671.1,617.3V625.2M675.7,618.4H682.8M675.5,618.9H682.3M676.1,625.2H682.4M678.2,617.5V623.5M679.4,619.1L675.3,625.4M679.4,619.8L683.5,625.4" stroke="#ffffff" stroke-width="1" fill="none" stroke-linejoin="round"/>
<path d="M690.7,613.5V626.0M688.9,617.2H692.4M688.9,624.1L690.7,619.1M690.7,619.1L692.4,622.2M693.8,614.6H696.1M693.7,616.4H696.2M695.0,617.5V625.6M695.0,619.1L692.9,625.4M695.0,619.8L697.2,625.4M699.9,613.5V626.0M698.1,617.2H701.6M698.1,624.1L699.9,619.1M699.9,619.1L701.6,622.2M702.8,615.1H705.3M703.3,615.2H706.1M702.2,620.0H706.2M705.0,615.1V625.9" stroke="#ffffff" stroke-width="1" fill="none" stroke-linejoin="round"/>
<path d="M714.4,613.5V626.0M712.7,617.2H715.9M713.1,621.2H715.7M713.1,625.4L714.2,622.9M716.7,614.7H719.3M717.2,616.4H719.5M718.1,615.3V624.3M717.8,614.2V624.8M722.7,613.5V626.0M721.0,617.2H724.2M721.4,621.2H724.0M721.4,625.4L722.5,622.9M724.8,619.3H727.7M725.3,621.9H728.5M724.9,622.9H727.7M725.1,623.0H727.6M725.6,616.6V625.5M726.6,619.8L728.5,625.4M731.0,613.5V626.0M729.4,617.2H732.5M729.4,624.1L731.0,619.1M731.0,619.1L732.5,622.2M733.7,614.2H735.9M734.0,614.2H736.7M733.0,622.7H736.0M733.8,624.1H736.6M735.0,616.2V624.7M734.9,619.1L733.0,625.4" stroke="#ffffff" stroke-width="1" fill="none" stroke-linejoin="round"/>
<path d="M597.1,631.1V643.6M595.3,634.9H598.8M595.7,638.9H598.6M595.7,643.0L596.9,640.5M600.1,635.6H602.9M600.1,641.7H602.4M599.7,641.7H602.8M601.2,634.4V642.3M602.4,633.8V641.3M601.4,636.7L599.3,643.0M605.6,635.9H612.7M605.6,636.9H612.4M605.0,637.0H612.3M605.8,639.6H612.4M608.7,633.5V642.6M607.1,632.6V641.8M608.7,636.7L604.5,643.0" stroke="#ffffff" stroke-width="1" fill="none" stroke-linejoin="round"/>
<path d="M663.5,632.6H670.6M662.8,633.6H670.1M663.5,636.9H670.4M663.2,642.6H669.7M665.2,635.2V641.7M667.0,633.9V643.8M666.8,637.6L662.8,643.9M666.8,638.2L670.9,643.9M672.4,634.3H679.2M672.8,638.3H679.6M673.0,638.5H679.5M672.2,640.7H679.1M674.2,634.2V644.0M675.9,637.6L671.8,643.9M675.9,638.2L680.0,643.9M672.0,636.4V643.2M680.0,636.4V643.2M682.7,632.0V644.5M680.9,635.8H684.3M681.3,639.8H684.2M681.3,643.9L682.5,641.4M685.7,639.5H688.3M685.9,643.6H688.5M687.7,632.2V642.0M686.0,634.9V643.2M686.9,637.6L684.8,643.9M685.0,636.4V643.2M689.0,636.4V643.2" stroke="#ffffff" stroke-width="1" fill="none" stroke-linejoin="round"/>
<path d="M596.4,649.9H603.3M595.8,654.3H603.1M599.1,650.6V657.6M599.4,654.1L595.3,660.4M599.4,654.8L603.6,660.4M604.9,651.0H612.5M605.1,654.9H612.8M608.0,651.8V660.9M606.7,649.3V657.4M608.7,654.1L604.5,660.4M608.7,654.8L612.8,660.4" stroke="#ffffff" stroke-width="1" fill="none" stroke-linejoin="round"/>
<path d="M664.8,648.5V661.0M662.8,652.2H666.6M662.8,659.1L664.8,654.1M664.8,654.1L666.6,657.2M667.6,649.8H671.5M668.4,650.3H670.9M667.9,653.3H670.8M670.0,652.8V657.6M669.9,653.2V660.1" stroke="#ffffff" stroke-width="1" fill="none" stroke-linejoin="round"/>
<path d="M678.4,650.0H685.7M678.1,654.4H685.8M678.1,658.7H686.7M683.1,650.0V660.7M682.3,654.1L677.8,660.4M678.0,652.9V659.8M686.8,652.9V659.8" stroke="#ffffff" stroke-width="1" fill="none" stroke-linejoin="round"/>
<path d="M597.1,665.9V678.4M595.3,669.6H598.8M595.3,676.5L597.1,671.5M597.1,671.5L598.8,674.6M599.7,667.2H603.3M600.4,667.7H602.7M600.0,670.7H602.7M601.9,670.2V675.0M601.9,670.6V677.5M605.4,669.7H612.8M605.3,669.8H611.9M605.5,670.2H612.7M605.7,673.5H612.8M608.6,668.7V675.2M608.7,671.5L604.5,677.8M604.7,670.3V677.1M612.8,670.3V677.1" stroke="#ffffff" stroke-width="1" fill="none" stroke-linejoin="round"/>
<path d="M597.1,682.0V694.5M595.3,685.8H598.8M595.3,692.6L597.1,687.6M597.1,687.6L598.8,690.8M600.0,683.0H603.2M599.3,693.3H602.9M600.8,682.1V691.5M601.4,687.6L599.3,693.9M601.4,688.2L603.6,693.9M606.3,682.0V694.5M604.5,685.8H608.0M604.9,689.8H607.8M604.9,693.9L606.2,691.4M609.6,684.6H612.2M609.4,685.3H612.5M608.7,685.6H611.7M610.0,686.0V691.9M610.4,683.5V693.6M610.7,687.6L608.5,693.9M610.7,688.2L612.8,693.9M608.7,686.4V693.2M612.8,686.4V693.2" stroke="#ffffff" stroke-width="1" fill="none" stroke-linejoin="round"/>
<path d="M664.8,682.0V694.5M662.8,685.8H666.6M663.2,689.8H666.4M663.2,693.9L664.6,691.4M667.6,686.5H671.1M667.7,687.9H671.2M670.2,684.5V692.5M670.3,683.2V692.9M669.5,687.6L667.1,693.9" stroke="#ffffff" stroke-width="1" fill="none" stroke-linejoin="round"/>
<path d="M678.4,684.3H686.0M678.9,688.3H686.4M679.1,688.5H686.3M678.2,690.7H685.9M680.4,684.2V694.0M682.3,687.6L677.8,693.9M682.3,688.2L686.8,693.9M678.0,686.4V693.2M686.8,686.4V693.2" stroke="#ffffff" stroke-width="1" fill="none" stroke-linejoin="round"/>
<path d="M758.9,641.2H766.0M759.1,646.3H765.8M758.5,648.0H766.1M764.3,639.8V645.6M760.8,641.1V646.3M762.4,641.8L758.4,648.1M762.4,642.5L766.3,648.1M768.9,636.2V648.7M767.2,640.0H770.5M767.2,646.8L768.9,641.8M768.9,641.8L770.5,645.0M771.3,640.5H774.3M771.1,643.2H774.7M772.7,640.4V647.1M773.0,641.8L771.0,648.1M776.7,636.8H783.5M776.0,637.8H783.0M776.6,641.1H783.4M776.4,646.8H782.7M778.3,639.4V645.9M780.0,638.1V648.0M779.9,641.8L775.9,648.1M779.9,642.5L783.8,648.1M785.8,637.3H791.4M785.3,647.2H792.1M787.0,637.9V646.4M788.5,637.7V645.2M788.6,641.8L784.7,648.1M784.8,640.6V647.5M792.6,640.6V647.5" stroke="#ffffff" stroke-width="1" fill="none" stroke-linejoin="round"/>
<path d="M821.2,637.3H828.9M821.3,637.5H828.8M821.3,639.6H829.7M827.0,640.6V645.6M825.1,642.1L820.5,648.4M825.1,642.8L829.7,648.4M820.7,640.9V647.8M829.7,640.9V647.8M831.0,638.6H839.2M831.9,638.7H839.5M830.8,641.9H839.5M831.0,644.7H839.0M836.9,638.8V648.3M834.9,637.3V648.5" stroke="#ffffff" stroke-width="1" fill="none" stroke-linejoin="round"/>
<path d="M854.4,636.5V649.0M852.5,640.2H856.1M852.5,647.1L854.4,642.1M854.4,642.1L856.1,645.2M857.7,647.1H860.2M857.2,647.6H860.1M858.7,641.1V646.4M863.9,636.5V649.0M862.0,640.2H865.6M862.0,647.1L863.9,642.1M863.9,642.1L865.6,645.2M866.5,638.4H870.4M866.3,646.5H870.4M866.5,646.5H870.2M866.7,646.6H869.5M867.4,637.7V645.6M868.3,642.1L866.1,648.4M868.3,642.8L870.5,648.4" stroke="#ffffff" stroke-width="1" fill="none" stroke-linejoin="round"/>
<path d="M767.2,682.0V694.5M765.5,685.8H768.9M765.9,689.8H768.7M765.9,693.9L767.1,691.4M769.4,683.2H772.4M770.1,686.1H773.5M769.7,686.4H773.5M769.4,689.4H772.6M771.9,682.5V690.9M770.6,686.3V691.3M771.4,687.6L769.3,693.9M771.4,688.2L773.5,693.9" stroke="#ffffff" stroke-width="1" fill="none" stroke-linejoin="round"/>
<path d="M802.2,682.0V694.5M800.5,685.8H803.9M800.9,689.8H803.7M800.9,693.9L802.1,691.4M805.4,686.2H808.1M805.2,691.0H808.4M805.7,684.2V693.7M806.3,682.4V691.2M806.4,687.6L804.3,693.9M804.5,686.4V693.2M808.5,686.4V693.2" stroke="#ffffff" stroke-width="1" fill="none" stroke-linejoin="round"/>
<path d="M815.5,682.7H821.7M814.7,686.5H822.4M814.5,687.5H822.4M816.7,686.9V693.3M818.5,687.6L814.5,693.9M818.5,688.2L822.5,693.9" stroke="#ffffff" stroke-width="1" fill="none" stroke-linejoin="round"/>
<path d="M835.2,682.0V694.5M833.5,685.8H836.9M833.9,689.8H836.7M833.9,693.9L835.1,691.4M838.4,686.2H841.1M838.2,691.0H841.4M838.7,684.2V693.7M839.3,682.4V691.2M839.4,687.6L837.3,693.9M837.5,686.4V693.2M841.5,686.4V693.2" stroke="#ffffff" stroke-width="1" fill="none" stroke-linejoin="round"/>
<path d="M627.0,649.5V658.5M625.6,652.2H628.3M625.6,657.1L627.0,653.5M627.0,653.5L628.3,655.8M628.8,651.7H631.1M629.4,652.4H631.1M629.5,658.0H631.6M629.9,650.6V657.2M630.3,653.5L628.7,658.0M630.3,654.0L631.9,658.0M628.8,652.6V657.6M631.9,652.6V657.6M634.0,649.5V658.5M632.6,652.2H635.3M632.6,657.1L634.0,653.5M634.0,653.5L635.3,655.8M636.2,650.6H638.1M636.6,650.7H638.7M635.7,654.1H638.8M637.8,650.7V658.4" stroke="#ffffff" stroke-width="1" fill="none" stroke-linejoin="round"/>
<path d="M641.04,655.48L643.12,655.48M644.86,654.18L647.64,654.18L644.86,658.50L647.64,658.50M649.03,654.18L651.81,658.50M651.81,654.18L649.03,658.50" stroke="#ffffff" stroke-width="1" fill="none" stroke-linejoin="round"/>
<path d="M823.79,664.60L826.96,669.40M826.96,664.60L823.79,669.40M828.54,664.60L831.71,669.40M831.71,664.60L828.54,669.40M833.29,664.60L836.46,669.40M836.46,664.60L833.29,669.40M841.21,662.20L838.04,662.20L838.04,665.20L840.42,665.20L841.21,666.40L841.21,668.20L840.42,669.40L838.04,669.40" stroke="#ffffff" stroke-width="1" fill="none" stroke-linejoin="round"/>
<path d="M852.79,664.60L855.96,669.40M855.96,664.60L852.79,669.40M857.54,664.60L860.71,669.40M860.71,664.60L857.54,669.40M862.29,664.60L865.46,669.40M865.46,664.60L862.29,669.40M869.81,662.20L867.83,662.20L867.04,663.40L867.04,668.20L867.83,669.40L869.42,669.40L870.21,668.20L870.21,666.40L869.42,665.20L867.04,665.20" stroke="#ffffff" stroke-width="1" fill="none" stroke-linejoin="round"/>
<path d="M776.17,687.72L780.83,693.00M780.83,687.72L776.17,693.00M783.17,687.72L787.83,693.00M787.83,687.72L783.17,693.00" stroke="#ffffff" stroke-width="1" fill="none" stroke-linejoin="round"/>
<path d="M842.79,687.72L845.96,693.00M845.96,687.72L842.79,693.00M847.54,687.72L850.71,693.00M850.71,687.72L847.54,693.00M852.29,687.72L855.46,693.00M855.46,687.72L852.29,693.00M857.04,693.00L857.04,685.08L859.42,685.08L860.21,686.40L860.21,687.72L859.42,689.04L857.04,689.04M859.42,689.04L860.21,690.36L860.21,691.68L859.42,693.00L857.04,693.00" stroke="#ffffff" stroke-width="1" fill="none" stroke-linejoin="round"/>
<path d="M780.1,588.5V606.0M777.6,593.8H782.3M778.2,599.4H782.1M778.2,605.1L779.9,601.6M783.4,595.4H788.3M783.6,598.3H788.4M783.3,603.1H787.6M784.0,604.9H787.3M784.9,589.6V604.0M785.9,596.4L783.0,605.1M785.9,597.2L788.8,605.1M783.2,594.6V604.2M788.8,594.6V604.2M791.5,589.4H799.7M791.0,591.3H800.4M790.9,600.1H800.4M794.7,594.6V601.9M794.5,591.4V602.8M795.6,596.4L790.0,605.1M795.6,597.2L801.2,605.1M804.9,588.5V606.0M802.4,593.8H807.1M803.0,599.4H806.9M803.0,605.1L804.7,601.6M809.4,594.5H812.0M807.8,599.4H813.0M809.3,593.9V603.7M808.0,594.6V604.2M813.6,594.6V604.2M817.3,588.5V606.0M814.8,593.8H819.5M814.8,603.4L817.3,596.4M817.3,596.4L819.5,600.8M820.6,595.9H824.4M821.2,600.2H825.2M820.6,601.2H824.7M820.3,603.9H824.9M824.3,588.9V601.6M824.4,593.0V605.4M823.1,597.2L826.0,605.1M820.4,594.6V604.2M826.0,594.6V604.2M829.7,588.5V606.0M827.2,593.8H831.9M827.2,603.4L829.7,596.4M829.7,596.4L831.9,600.8M833.7,592.3H838.3M833.9,597.1H837.9M834.1,591.4V605.9M835.5,596.4L832.6,605.1M835.5,597.2L838.4,605.1" stroke="#ffffff" stroke-width="1" fill="none" stroke-linejoin="round"/>
<path d="M939.4,580L945.0,589M945.0,580L939.4,589M949.2,580L955.0,589M955.0,580L949.2,589M959.2,580L965.0,589M965.0,580L959.2,589" stroke="#ffffff" fill="none" stroke-width="1.1"/>
<path d="M970.17,577.60L971.33,575.32L973.67,575.32L974.83,577.60L974.83,579.88L970.17,589.00L974.83,589.00" stroke="#ffffff" stroke-width="1" fill="none" stroke-linejoin="round"/>
<path d="M942.2,624L948.6,634M948.6,624L942.2,634M951.8,624L958.3,634M958.3,624L951.8,634M962.0,624L968.4,634M968.4,624L962.0,634" stroke="#ffffff" fill="none" stroke-width="1.1"/>
<path d="M973.33,619.60L978.67,619.60L976.00,625.60L977.33,625.60L978.67,628.00L978.67,631.60L977.33,634.00L974.67,634.00L973.33,631.60" stroke="#ffffff" stroke-width="1" fill="none" stroke-linejoin="round"/>
<path d="M936.3,673L943.0,682.5M943.0,673L936.3,682.5M946.8,673L953.3,682.5M953.3,673L946.8,682.5M957.0,673L963.4,682.5M963.4,673L957.0,682.5M967.1,673L973.6,682.5M973.6,673L967.1,682.5" stroke="#ffffff" fill="none" stroke-width="1.1"/>
<path d="M982.40,682.50L982.40,669.54L977.90,678.18L983.90,678.18" stroke="#ffffff" stroke-width="1" fill="none" stroke-linejoin="round"/>
<rect x="0" y="0" width="1035" height="12" fill="#f0f0f0"/>
<rect x="0" y="7" width="1035" height="1" fill="#ffffff"/>
<rect x="0" y="8" width="1035" height="1" fill="#a4a4a4"/>
<rect x="0" y="9" width="1035" height="1" fill="#bcbcbc"/>
<rect x="0" y="10" width="1035" height="1" fill="#f4f4f4"/>
<rect x="0" y="11" width="1035" height="1" fill="#7a7a7a"/>
<rect x="1" y="0" width="9" height="4" fill="#ffffff"/>
<rect x="1.5" y="-1" width="9" height="5" fill="none" stroke="#2a5caa"/>
<rect x="2" y="0" width="4" height="2" fill="#e8c800"/>
<rect x="15" y="0" width="226" height="7" fill="#ececec"/>
<rect x="241" y="0" width="18" height="7" fill="#ffffff"/>
<rect x="259" y="0" width="1" height="8" fill="#b8b8b8"/>
<ellipse cx="24" cy="1" rx="4" ry="3" fill="#d8d000"/>
<rect x="31.5" y="-2" width="9" height="5" fill="#fff" stroke="#000"/>
<text x="46" y="3" font-size="11" fill="#404040" font-family="Liberation Serif">dim</text>
<text x="250" y="3" font-size="6" fill="#404040">▾</text>
<path d="M264,2 L270,-1 L276,2 L270,5 Z" fill="#e8b800" stroke="#806000" stroke-width="0.5"/>
<path d="M263,6 L266,3" stroke="#2040a0" stroke-width="1.2"/>
<path d="M286,2 L294,-2 L302,2 L294,6 Z" fill="#a8c0e0" stroke="#506080" stroke-width="0.7"/>
<rect x="309" y="0" width="1" height="9" fill="#c0c0c0"/>
<rect x="313" y="0" width="1" height="9" fill="#909090"/>
<rect x="317" y="0" width="1" height="9" fill="#909090"/>
<rect x="325" y="0" width="130" height="7" fill="#ececec"/>
<rect x="455" y="0" width="18" height="7" fill="#ffffff"/>
<rect x="473" y="0" width="1" height="8" fill="#b8b8b8"/>
<rect x="330.5" y="-2" width="9" height="5" fill="#fff" stroke="#000"/>
<text x="344" y="3" font-size="11" fill="#404040" font-family="Liberation Serif">ByLayer</text>
<rect x="476" y="0" width="1" height="9" fill="#909090"/>
<rect x="479" y="0" width="1" height="9" fill="#c0c0c0"/>
<rect x="482" y="0" width="139" height="7" fill="#ececec"/>
<rect x="621" y="0" width="18" height="7" fill="#ffffff"/>
<rect x="639" y="0" width="1" height="8" fill="#b8b8b8"/>
<text x="550" y="3" font-size="11" fill="#404040" font-family="Liberation Serif">ByLayer</text>
<rect x="642" y="0" width="1" height="9" fill="#909090"/>
<rect x="645" y="0" width="1" height="9" fill="#c0c0c0"/>
<rect x="647" y="0" width="105" height="7" fill="#ececec"/>
<rect x="752" y="0" width="17" height="7" fill="#ffffff"/>
<rect x="769" y="0" width="1" height="8" fill="#b8b8b8"/>
<text x="690" y="3" font-size="11" fill="#404040" font-family="Liberation Serif">ByLayer</text>
<rect x="773" y="0" width="1" height="9" fill="#909090"/>
<rect x="776" y="0" width="1" height="9" fill="#c0c0c0"/>
<rect x="778" y="0" width="100" height="7" fill="#ececec"/>
<rect x="878" y="0" width="19" height="7" fill="#ffffff"/>
<rect x="897" y="0" width="3" height="8" fill="#c8c8c8"/>
<path d="M787,3 h10 M799,3 h10 M811,0 v3 h10 v-3" stroke="#404040" fill="none"/>
<rect x="0" y="695" width="1035" height="8" fill="#ececec"/>
<rect x="0" y="695" width="4" height="8" fill="#dcdcdc"/>
<rect x="4" y="695" width="1" height="8" fill="#ffffff"/>
<rect x="5" y="695" width="2" height="8" fill="#d0d0d0"/>
<rect x="7" y="695" width="14" height="8" fill="#ffffff"/>
<path d="M11.5,697 V703 M11.5,697 L18.5,703 M18.5,697 V703" stroke="#000" stroke-width="1.3" fill="none"/>
<rect x="21" y="695" width="4" height="8" fill="#c8c8c8"/>
<rect x="25" y="695" width="38" height="8" fill="#ffffff"/>
<path d="M26,696 l3,7 M64,696 l3,7" stroke="#000" stroke-width="1.1"/>
<path d="M39.1,695.0V704.0M36.6,697.7H41.4M37.2,700.6H41.1M37.2,703.5L38.9,701.8M43.3,696.3H47.2M42.9,700.6H46.6M43.1,703.2H46.8M45.6,697.4V704.0M45.0,699.5L47.9,703.5M51.6,695.0V704.0M49.1,697.7H53.9M49.1,702.6L51.6,699.0M51.6,699.0L53.9,701.3M54.7,696.2H59.7M56.1,702.5H59.9M58.4,696.0V703.8M57.5,699.0L54.5,703.5M57.5,699.5L60.4,703.5" stroke="#000" stroke-width="1" fill="none" stroke-linejoin="round"/>
<rect x="67" y="695" width="120" height="8" fill="#000000"/>
<text x="71.5" y="705" fill="#ffffff" font-size="11" text-anchor="start" textLength="9" lengthAdjust="spacingAndGlyphs">Gb</text>
<text x="89" y="705" fill="#ffffff" font-size="11" text-anchor="start" textLength="11.5" lengthAdjust="spacingAndGlyphs">A3</text>
<path d="M110.3,696.0V705.0M108.0,698.7H112.3M108.5,701.6H112.1M108.5,704.5L110.0,702.8M114.1,697.3H117.7M113.7,701.6H117.2M114.0,704.2H117.4M116.2,698.4V705.0M115.6,700.5L118.3,704.5M121.8,696.0V705.0M119.5,698.7H123.8M120.0,701.6H123.6M120.0,704.5L121.5,702.8M125.7,699.7H128.4M125.0,700.7H129.2M125.3,702.0H128.5M127.1,696.7V703.1M127.1,700.0L124.4,704.5M127.1,700.5L129.8,704.5" stroke="#ffffff" stroke-width="1" fill="none" stroke-linejoin="round"/>
<text x="136" y="705" fill="#ffffff" font-size="11" text-anchor="start">(</text>
<path d="M143.3,699.6H152.7M143.9,700.1H153.5M150.1,699.3V704.2M148.6,700.0L143.1,704.5M143.3,699.1V704.1M154.1,699.1V704.1M157.8,696.0V705.0M155.4,698.7H160.0M155.9,701.6H159.8M155.9,704.5L157.6,702.8M161.5,702.6H165.9M160.8,703.3H164.8M161.2,703.5H166.4M160.9,704.4H166.2M164.7,696.0V704.9M164.9,699.2V702.3M163.5,700.0L160.7,704.5M163.5,700.5L166.4,704.5" stroke="#ffffff" stroke-width="1" fill="none" stroke-linejoin="round"/>
<text x="170" y="705" fill="#ffffff" font-size="11" text-anchor="start">)</text>
<path d="M183,703 l3.5,-7" stroke="#fff" stroke-width="1.1"/>
<rect x="187" y="695" width="848" height="8" fill="#ececec"/>
<rect x="187" y="695" width="848" height="1" fill="#ffffff"/>
</svg>
</body></html>
